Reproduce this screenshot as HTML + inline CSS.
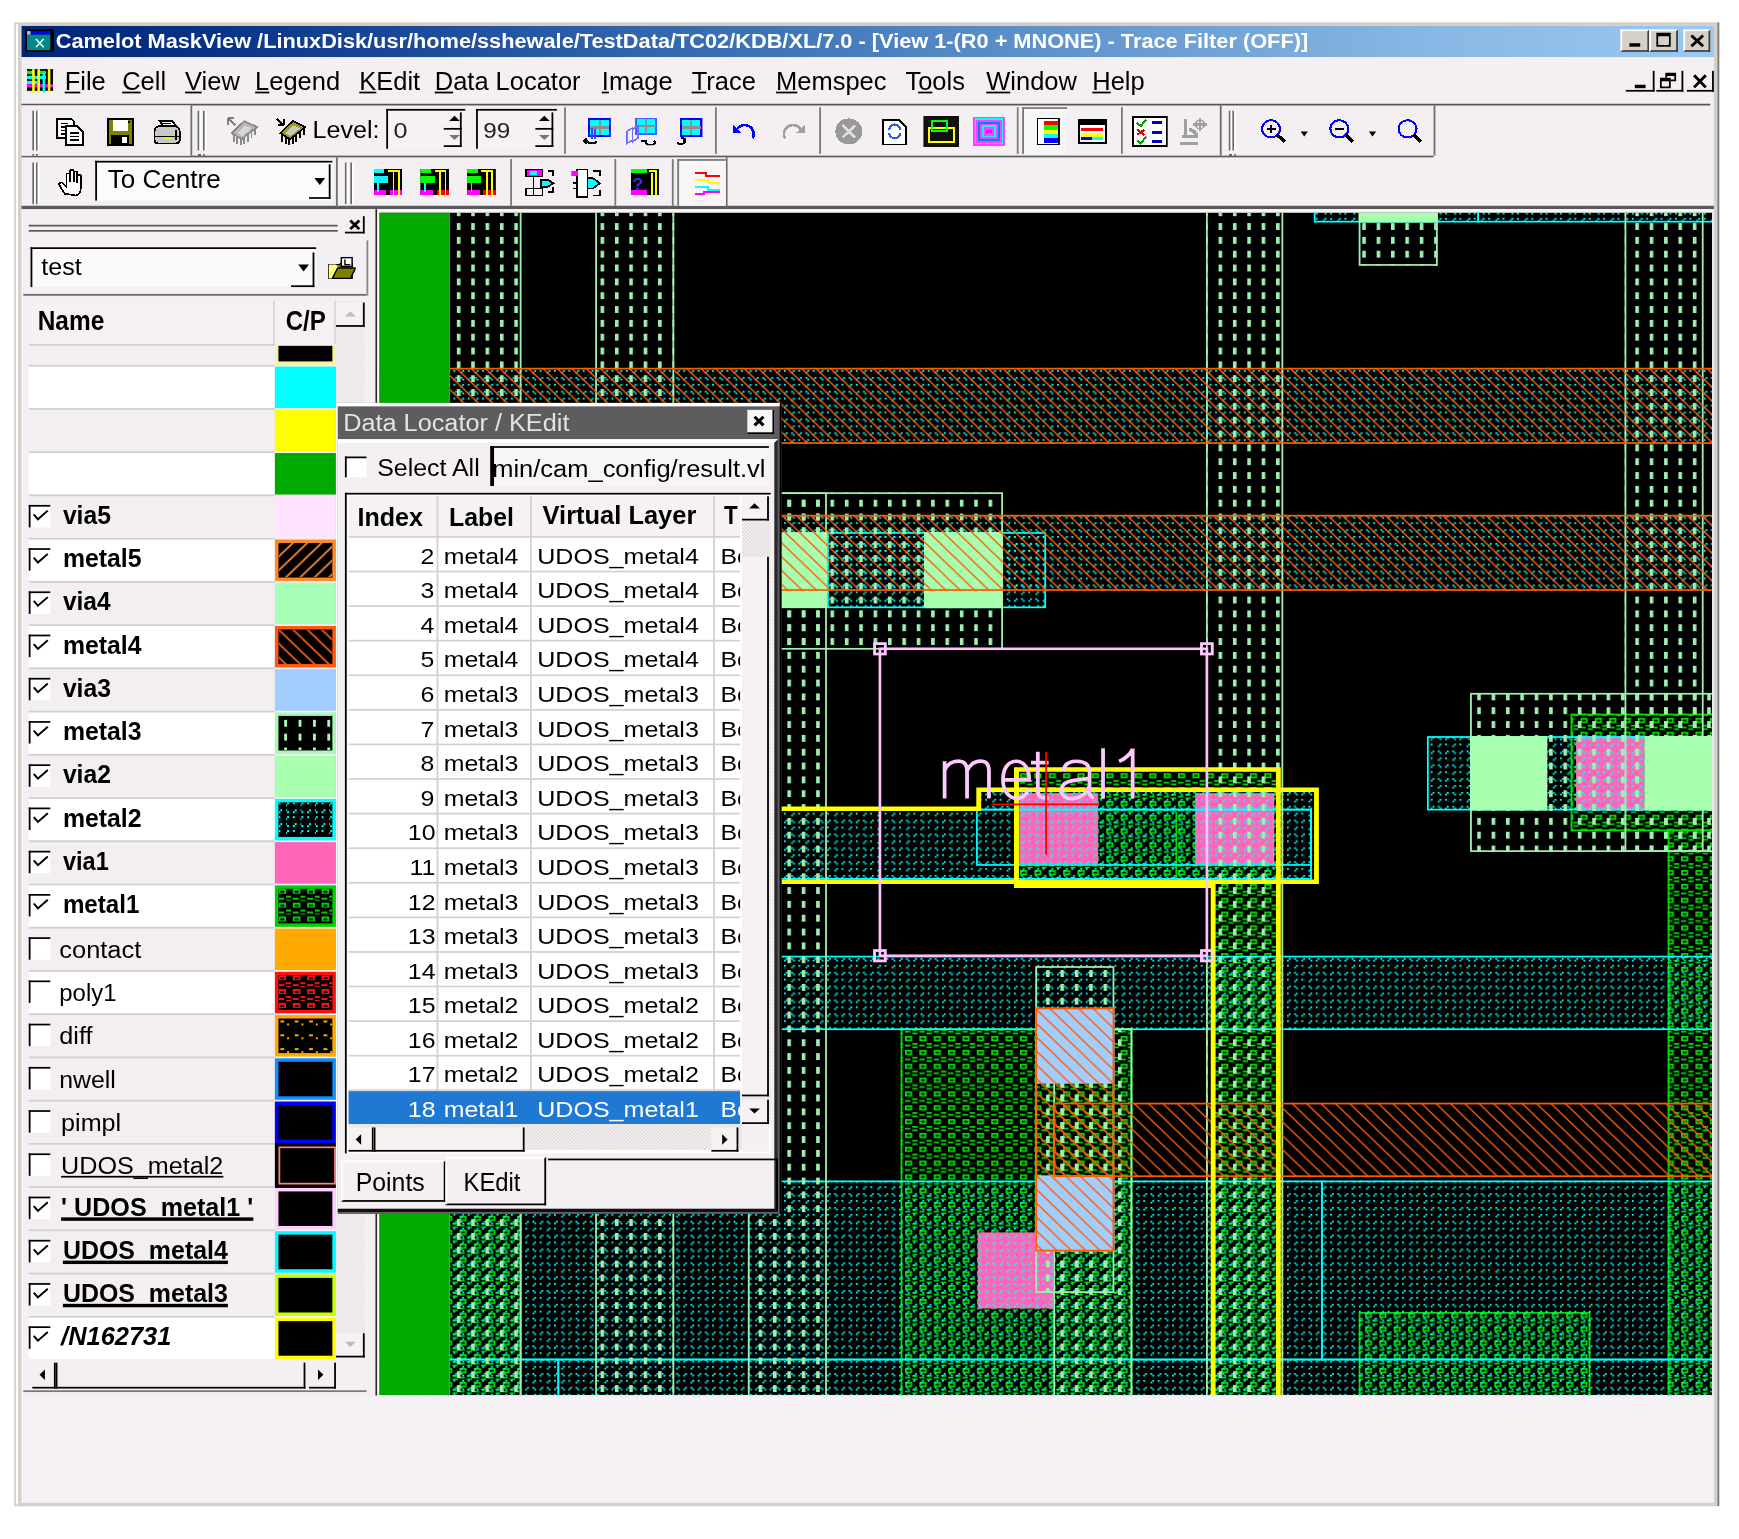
<!DOCTYPE html>
<html><head><meta charset="utf-8"><style>
html,body{margin:0;padding:0;background:#fff;overflow:hidden;width:1739px;height:1539px}
#root{will-change:transform;position:absolute;left:0;top:0;width:968px;height:890px;transform:scale(1.796488,1.729213);transform-origin:0 0;font-family:"Liberation Sans", sans-serif}
u{text-decoration:none;border-bottom:1px solid currentColor}
</style></head><body><div id="root">
<div style="position:absolute;left:8px;top:13px;width:949.4px;height:858.4px;background:#d8d2cc;"></div><div style="position:absolute;left:9px;top:14px;width:946.5px;height:855.6px;background:#ffffff;"></div><div style="position:absolute;left:10px;top:13.4px;width:946.3px;height:858.0px;background:#d6d0ca;"></div><div style="position:absolute;left:956.3px;top:13.4px;width:1.1000000000000227px;height:858.0px;background:#7a7a7a;"></div><div style="position:absolute;left:8px;top:13.4px;width:1px;height:858.0px;background:#d8d2cc;"></div><div style="position:absolute;left:9px;top:14.2px;width:1px;height:855.3px;background:#ffffff;"></div><div style="position:absolute;left:12.2px;top:14.6px;width:942.3px;height:854.6px;background:#f4eff2;"></div><div style="position:absolute;left:12.2px;top:14.6px;width:942.0px;height:18.1px;background:linear-gradient(to right,#002478 0%,#0a3488 12%,#3a70b4 42%,#5a8ec8 58%,#86b6e2 82%,#9cc8f0 100%);"></div><div style="position:absolute;left:13.5px;top:16.7px;width:16.1px;height:13.8px;background:#000;"><div style="position:absolute;left:1.8px;top:1.8px;width:12.5px;height:2px;background:#0000ff"></div><div style="position:absolute;left:1.8px;top:3.8px;width:12.5px;height:8.2px;background:#008888"></div><div style="position:absolute;left:1.8px;top:1.8px;width:2px;height:2px;background:#c0c0c0"></div><svg style="position:absolute;left:0;top:0" width="16" height="14"><path d="M6 5.6L10.3 10.3M10.3 5.6L6 10.3" stroke="#e0ffff" stroke-width="0.9"/></svg></div><div style="position:absolute;left:31.17px;top:18.63px;font-size:11.26px;font-weight:bold;color:#fff;white-space:nowrap;line-height:1;transform:scaleX(1.0759);transform-origin:0 0;">Camelot MaskView /LinuxDisk/usr/home/sshewale/TestData/TC02/KDB/XL/7.0 - [View 1-(R0 + MNONE) - Trace Filter (OFF)]</div><div style="position:absolute;left:902.4px;top:16.9px;width:15.6px;height:13.5px;background:#d4d0c8;border-top:1px solid #fff;border-left:1px solid #fff;border-right:1px solid #404040;border-bottom:1px solid #404040;box-sizing:border-box;"><div style="position:absolute;left:3.5px;top:7.5px;width:6px;height:2px;background:#000"></div></div><div style="position:absolute;left:918.3px;top:16.9px;width:15.6px;height:13.5px;background:#d4d0c8;border-top:1px solid #fff;border-left:1px solid #fff;border-right:1px solid #404040;border-bottom:1px solid #404040;box-sizing:border-box;"><div style="position:absolute;left:2.5px;top:1.5px;width:8.5px;height:7.5px;border:1px solid #000;border-top-width:2px;box-sizing:border-box"></div></div><div style="position:absolute;left:936.6px;top:16.9px;width:15.6px;height:13.5px;background:#d4d0c8;border-top:1px solid #fff;border-left:1px solid #fff;border-right:1px solid #404040;border-bottom:1px solid #404040;box-sizing:border-box;"><svg style="position:absolute;left:0;top:0" width="14" height="12"><path d="M3.5 2.5L10 8.8M10 2.5L3.5 8.8" stroke="#000" stroke-width="1.6"/></svg></div><div style="position:absolute;left:15px;top:39.3px;width:14.5px;height:14.5px;"><svg width="14.5" height="14.5" viewBox="0 0 15 15" style="position:absolute;left:0;top:0"><rect x="0" y="1" width="15" height="13" fill="#000"/><rect x="0" y="2" width="4" height="2" fill="#00ff00"/><rect x="7" y="2" width="4" height="2" fill="#00ff00"/><rect x="0" y="5" width="11" height="2" fill="#00ffff"/><rect x="0" y="8" width="6" height="2" fill="#00ffff"/><rect x="0" y="10" width="15" height="2" fill="#ff00ff"/><rect x="3" y="1" width="1.5" height="14" fill="#ffff00"/><rect x="6" y="1" width="1.5" height="14" fill="#ffff00"/><rect x="9" y="3" width="1.5" height="12" fill="#00ffff"/><rect x="12" y="1" width="1.5" height="13" fill="#ffff00"/></svg></div><div style="position:absolute;left:35.51px;top:39.91px;font-size:14.54px;font-weight:normal;color:#000;white-space:nowrap;line-height:1;transform:scaleX(0.9754);transform-origin:0 0;color:#000;"><span style="text-decoration:underline;text-underline-offset:1.1px;text-decoration-thickness:1px">F</span>ile</div><div style="position:absolute;left:68.19px;top:39.91px;font-size:14.54px;font-weight:normal;color:#000;white-space:nowrap;line-height:1;transform:scaleX(0.9754);transform-origin:0 0;color:#000;"><span style="text-decoration:underline;text-underline-offset:1.1px;text-decoration-thickness:1px">C</span>ell</div><div style="position:absolute;left:102.76px;top:39.91px;font-size:14.54px;font-weight:normal;color:#000;white-space:nowrap;line-height:1;transform:scaleX(0.9754);transform-origin:0 0;color:#000;"><span style="text-decoration:underline;text-underline-offset:1.1px;text-decoration-thickness:1px">V</span>iew</div><div style="position:absolute;left:141.55px;top:39.91px;font-size:14.54px;font-weight:normal;color:#000;white-space:nowrap;line-height:1;transform:scaleX(0.9754);transform-origin:0 0;color:#000;"><span style="text-decoration:underline;text-underline-offset:1.1px;text-decoration-thickness:1px">L</span>egend</div><div style="position:absolute;left:199.78px;top:39.91px;font-size:14.54px;font-weight:normal;color:#000;white-space:nowrap;line-height:1;transform:scaleX(0.9754);transform-origin:0 0;color:#000;"><span style="text-decoration:underline;text-underline-offset:1.1px;text-decoration-thickness:1px">K</span>Edit</div><div style="position:absolute;left:242.42px;top:39.91px;font-size:14.54px;font-weight:normal;color:#000;white-space:nowrap;line-height:1;transform:scaleX(0.9754);transform-origin:0 0;color:#000;"><span style="text-decoration:underline;text-underline-offset:1.1px;text-decoration-thickness:1px">D</span>ata Locator</div><div style="position:absolute;left:334.76px;top:39.91px;font-size:14.54px;font-weight:normal;color:#000;white-space:nowrap;line-height:1;transform:scaleX(0.9754);transform-origin:0 0;color:#000;"><span style="text-decoration:underline;text-underline-offset:1.1px;text-decoration-thickness:1px">I</span>mage</div><div style="position:absolute;left:384.70px;top:39.91px;font-size:14.54px;font-weight:normal;color:#000;white-space:nowrap;line-height:1;transform:scaleX(0.9754);transform-origin:0 0;color:#000;"><span style="text-decoration:underline;text-underline-offset:1.1px;text-decoration-thickness:1px">T</span>race</div><div style="position:absolute;left:431.79px;top:39.91px;font-size:14.54px;font-weight:normal;color:#000;white-space:nowrap;line-height:1;transform:scaleX(0.9754);transform-origin:0 0;color:#000;"><span style="text-decoration:underline;text-underline-offset:1.1px;text-decoration-thickness:1px">M</span>emspec</div><div style="position:absolute;left:504.32px;top:39.91px;font-size:14.54px;font-weight:normal;color:#000;white-space:nowrap;line-height:1;transform:scaleX(0.9754);transform-origin:0 0;color:#000;">T<span style="text-decoration:underline;text-underline-offset:1.1px;text-decoration-thickness:1px">o</span>ols</div><div style="position:absolute;left:548.51px;top:39.91px;font-size:14.54px;font-weight:normal;color:#000;white-space:nowrap;line-height:1;transform:scaleX(0.9754);transform-origin:0 0;color:#000;"><span style="text-decoration:underline;text-underline-offset:1.1px;text-decoration-thickness:1px">W</span>indow</div><div style="position:absolute;left:608.47px;top:39.91px;font-size:14.54px;font-weight:normal;color:#000;white-space:nowrap;line-height:1;transform:scaleX(0.9754);transform-origin:0 0;color:#000;"><span style="text-decoration:underline;text-underline-offset:1.1px;text-decoration-thickness:1px">H</span>elp</div><div style="position:absolute;left:905px;top:40.6px;width:16px;height:12.899999999999999px;border-right:1px solid #000;border-bottom:1px solid #000;box-sizing:border-box;"><div style="position:absolute;left:4.5px;top:8px;width:6px;height:2px;background:#000"></div></div><div style="position:absolute;left:921.5px;top:40.6px;width:15.5px;height:12.899999999999999px;border-right:1px solid #000;border-bottom:1px solid #000;box-sizing:border-box;"><div style="position:absolute;left:5px;top:1.5px;width:6px;height:5px;border:1px solid #000;border-top-width:2px;box-sizing:border-box"></div><div style="position:absolute;left:2.5px;top:4.5px;width:6px;height:5.5px;border:1px solid #000;border-top-width:2px;box-sizing:border-box;background:#f4eff2"></div></div><div style="position:absolute;left:939.3px;top:40.6px;width:14.900000000000091px;height:12.899999999999999px;border-right:1px solid #000;border-bottom:1px solid #000;box-sizing:border-box;"><svg style="position:absolute;left:0;top:0" width="15" height="13"><path d="M4 2.5L10.5 9.5M10.5 2.5L4 9.5" stroke="#000" stroke-width="1.6"/></svg></div><div style="position:absolute;left:12.2px;top:59.8px;width:940.1999999999999px;height:1.0px;background:#555;"></div><div style="position:absolute;left:12.2px;top:807.2px;width:942.0px;height:62.0px;background:#f4eff2;"></div><div style="position:absolute;left:13px;top:808px;width:940px;height:60px;background:#f5f1f4;"></div><div style="position:absolute;left:12.2px;top:89.6px;width:785.8599999999999px;height:1.0px;background:#5f5f5f;"></div><div style="position:absolute;left:12.2px;top:119.4px;width:942.0px;height:1.8999999999999915px;background:#5a5a5a;"></div><div style="position:absolute;left:210.4px;top:121.3px;width:743.8000000000001px;height:1.2000000000000028px;background:#fbf9fa;"></div><div style="position:absolute;left:12.2px;top:60.8px;width:93.67326049453709px;height:28.799999999999997px;background:#f3eef1;"></div><div style="position:absolute;left:17.53px;top:63.6px;width:1.0px;height:23.4px;background:#6a6a6a;"></div><div style="position:absolute;left:18.53px;top:63.6px;width:1.0px;height:23.4px;background:#ffffff;"></div><div style="position:absolute;left:19.73px;top:63.6px;width:1.0px;height:23.4px;background:#6a6a6a;"></div><div style="position:absolute;left:20.73px;top:63.6px;width:1.0px;height:23.4px;background:#ffffff;"></div><div style="position:absolute;left:17.53px;top:88.5px;width:3.5px;height:0.7999999999999972px;border-top:1px dotted #666;box-sizing:border-box;"></div><div style="position:absolute;left:110.49px;top:63.6px;width:1.0px;height:23.4px;background:#6a6a6a;"></div><div style="position:absolute;left:111.49px;top:63.6px;width:1.0px;height:23.4px;background:#ffffff;"></div><div style="position:absolute;left:112.69px;top:63.6px;width:1.0px;height:23.4px;background:#6a6a6a;"></div><div style="position:absolute;left:113.69px;top:63.6px;width:1.0px;height:23.4px;background:#ffffff;"></div><div style="position:absolute;left:110.49px;top:88.5px;width:3.5px;height:0.7999999999999972px;border-top:1px dotted #666;box-sizing:border-box;"></div><div style="position:absolute;left:684.11px;top:63.6px;width:1.0px;height:23.4px;background:#6a6a6a;"></div><div style="position:absolute;left:685.11px;top:63.6px;width:1.0px;height:23.4px;background:#ffffff;"></div><div style="position:absolute;left:686.3100000000001px;top:63.6px;width:1.0px;height:23.4px;background:#6a6a6a;"></div><div style="position:absolute;left:687.3100000000001px;top:63.6px;width:1.0px;height:23.4px;background:#ffffff;"></div><div style="position:absolute;left:684.11px;top:88.5px;width:3.5px;height:0.7999999999999972px;border-top:1px dotted #666;box-sizing:border-box;"></div><div style="position:absolute;left:17.53px;top:93.5px;width:1.0px;height:24.0px;background:#6a6a6a;"></div><div style="position:absolute;left:18.53px;top:93.5px;width:1.0px;height:24.0px;background:#ffffff;"></div><div style="position:absolute;left:19.73px;top:93.5px;width:1.0px;height:24.0px;background:#6a6a6a;"></div><div style="position:absolute;left:20.73px;top:93.5px;width:1.0px;height:24.0px;background:#ffffff;"></div><div style="position:absolute;left:17.53px;top:119.0px;width:3.5px;height:0.7999999999999972px;border-top:1px dotted #666;box-sizing:border-box;"></div><div style="position:absolute;left:192.32px;top:93.5px;width:1.0px;height:24.0px;background:#6a6a6a;"></div><div style="position:absolute;left:193.32px;top:93.5px;width:1.0px;height:24.0px;background:#ffffff;"></div><div style="position:absolute;left:194.51999999999998px;top:93.5px;width:1.0px;height:24.0px;background:#6a6a6a;"></div><div style="position:absolute;left:195.51999999999998px;top:93.5px;width:1.0px;height:24.0px;background:#ffffff;"></div><div style="position:absolute;left:192.32px;top:119.0px;width:3.5px;height:0.7999999999999972px;border-top:1px dotted #666;box-sizing:border-box;"></div><div style="position:absolute;left:105.87px;top:61px;width:1.0px;height:28.599999999999994px;background:#6e6e6e;"></div><div style="position:absolute;left:679.21px;top:61px;width:1.0px;height:28.599999999999994px;background:#6e6e6e;"></div><div style="position:absolute;left:798.06px;top:61px;width:1.0px;height:28.599999999999994px;background:#6e6e6e;"></div><div style="position:absolute;left:187.25px;top:91px;width:1.0px;height:29px;background:#6e6e6e;"></div><div style="position:absolute;left:404.12px;top:91px;width:1.0px;height:29px;background:#6e6e6e;"></div><div style="position:absolute;left:313.95px;top:62px;width:1.0px;height:26.599999999999994px;background:#7a7a7a;"></div><div style="position:absolute;left:397.72px;top:62px;width:1.0px;height:26.599999999999994px;background:#7a7a7a;"></div><div style="position:absolute;left:455.78px;top:62px;width:1.0px;height:26.599999999999994px;background:#7a7a7a;"></div><div style="position:absolute;left:565.99px;top:62px;width:1.0px;height:26.599999999999994px;background:#7a7a7a;"></div><div style="position:absolute;left:623.88px;top:62px;width:1.0px;height:26.599999999999994px;background:#7a7a7a;"></div><div style="position:absolute;left:283.66px;top:92px;width:1.0px;height:27px;background:#7a7a7a;"></div><div style="position:absolute;left:341.78px;top:92px;width:1.0px;height:27px;background:#7a7a7a;"></div><div style="position:absolute;left:373.78px;top:92px;width:1.0px;height:27px;background:#7a7a7a;"></div><svg style="position:absolute;left:31.17px;top:67.5px" width="17" height="17" viewBox="0 0 17 17" shape-rendering="crispEdges"><path d="M1 1h8l1 1v10H1z" fill="#fff" stroke="#000" stroke-width="1.1"/><path d="M3 3.5h4M3 5.5h2M3 7.5h2M3 9.5h2" stroke="#000" stroke-width="0.9"/><path d="M6 5h6l3 3v8H6z" fill="#fff" stroke="#000" stroke-width="1.1"/><path d="M8 9h5M8 11h5M8 13h5" stroke="#000" stroke-width="0.9"/></svg><svg style="position:absolute;left:59.0px;top:67.5px" width="16" height="17" viewBox="0 0 16 17" shape-rendering="crispEdges"><rect x="1" y="1" width="14" height="15" fill="#808000" stroke="#000" stroke-width="1.1"/><rect x="4" y="1.5" width="8.5" height="6.5" fill="#fff"/><rect x="12.5" y="2" width="1" height="1.2" fill="#000"/><rect x="3" y="10" width="10" height="5.5" fill="#000"/><rect x="9" y="11" width="2.5" height="3.5" fill="#fff"/></svg><svg style="position:absolute;left:84.05px;top:67.5px" width="17" height="17" viewBox="0 0 17 17" shape-rendering="crispEdges"><path d="M5 2l7 0 2 3-7 0z" fill="#fff" stroke="#000" stroke-width="1"/><path d="M6 3.5h5M6.5 5h4" stroke="#000" stroke-width="0.7"/><path d="M2 8c0-2 1-3 3-3h8c2 0 3 1 3 3v5c0 1-1 2-2 2H4c-1 0-2-1-2-2z" fill="#c8c8c8" stroke="#000" stroke-width="1.1"/><path d="M2 11h14" stroke="#000" stroke-width="0.8"/><rect x="8" y="11.6" width="3" height="1" fill="#ffff00"/><path d="M14 7v6" stroke="#000" stroke-width="0.7"/></svg><svg style="position:absolute;left:125.8px;top:67px" width="18" height="18" viewBox="0 0 18 18" shape-rendering="crispEdges"><path d="M4 15v-5M6 16v-5M8 17v-4M10 16v-5M12 15v-5M14 13v-5M16 11v-5" stroke="#8a8a8a" stroke-width="1.1"/><path d="M3 10L10 3L17 6.5L8.5 13.5Z" fill="#b8b8b8" stroke="#8a8a8a" stroke-width="1"/><path d="M6 10L10.2 5.6L14 7.2L8.8 11.6Z" fill="#d8d8d8"/><path d="M1 1.5l4 4M1 1.5h3.5M1 1.5v3.5" stroke="#808080" stroke-width="1.2"/></svg><svg style="position:absolute;left:152.52px;top:67px" width="18" height="18" viewBox="0 0 18 18" shape-rendering="crispEdges"><path d="M4 15v-5M6 16v-5M8 17v-4M10 16v-5M12 15v-5M14 13v-5M16 11v-5" stroke="#000" stroke-width="1.1"/><path d="M3 10L10 3L17 6.5L8.5 13.5Z" fill="#a09820" stroke="#000" stroke-width="1"/><path d="M6 10L10.2 5.6L14 7.2L8.8 11.6Z" fill="#c8c8c8"/><path d="M1 1.5l3.5 3.5M5 5.5h-3.5M5 5.5v-3.5" stroke="#000" stroke-width="1.2"/></svg><div style="position:absolute;left:173.89px;top:69.41px;font-size:13.79px;font-weight:normal;color:#000;white-space:nowrap;line-height:1;transform:scaleX(1.0139);transform-origin:0 0;">Level:</div><div style="position:absolute;left:215.42px;top:63px;width:43.97999999999999px;height:23.299999999999997px;border-left:1.5px solid #000;border-top:1.5px solid #000;box-sizing:border-box;background:#f6f2f4;"></div><div style="position:absolute;left:247.39999999999998px;top:64.5px;width:10.0px;height:10.0px;border-right:1px solid #000;border-bottom:1px solid #000;box-sizing:border-box;"><div style="position:absolute;left:2.5px;top:2.5px;width:0;height:0;border-left:3px solid transparent;border-right:3px solid transparent;border-bottom:3px solid #000"></div></div><div style="position:absolute;left:247.39999999999998px;top:75px;width:10.0px;height:10px;border-right:1px solid #000;border-bottom:1px solid #000;box-sizing:border-box;"><div style="position:absolute;left:2.5px;top:3px;width:0;height:0;border-left:3px solid transparent;border-right:3px solid transparent;border-top:3px solid #777"></div></div><div style="position:absolute;left:218.98px;top:70.26px;font-size:12.78px;font-weight:normal;color:#222;white-space:nowrap;line-height:1;transform:scaleX(1.0967);transform-origin:0 0;">0</div><div style="position:absolute;left:265.35px;top:63px;width:44.370000000000005px;height:23.299999999999997px;border-left:1.5px solid #000;border-top:1.5px solid #000;box-sizing:border-box;background:#f6f2f4;"></div><div style="position:absolute;left:297.72px;top:64.5px;width:10.0px;height:10.0px;border-right:1px solid #000;border-bottom:1px solid #000;box-sizing:border-box;"><div style="position:absolute;left:2.5px;top:2.5px;width:0;height:0;border-left:3px solid transparent;border-right:3px solid transparent;border-bottom:3px solid #000"></div></div><div style="position:absolute;left:297.72px;top:75px;width:10.0px;height:10px;border-right:1px solid #000;border-bottom:1px solid #000;box-sizing:border-box;"><div style="position:absolute;left:2.5px;top:3px;width:0;height:0;border-left:3px solid transparent;border-right:3px solid transparent;border-top:3px solid #777"></div></div><div style="position:absolute;left:268.86px;top:70.26px;font-size:12.78px;font-weight:normal;color:#222;white-space:nowrap;line-height:1;transform:scaleX(1.0575);transform-origin:0 0;">99</div><svg style="position:absolute;left:323.8px;top:68px" width="16" height="16" viewBox="0 0 16 16" shape-rendering="crispEdges"><rect x="4" y="1" width="11.5" height="9.5" fill="#00ffff" stroke="#0000ff" stroke-width="1.2"/><path d="M9.8 1.5v8.5M4.5 5.8h10.5" stroke="#909090" stroke-width="1.3"/><path d="M5.5 6v6.5M7 6.5v6" stroke="#4040ff" stroke-width="1"/><path d="M1 13.5h2.5M3 13.5a2.5 1.5 0 1 0 5 0" stroke="#000" fill="none" stroke-width="1.2"/><path d="M1 13.5l1.5-1.5M1 13.5l1.5 1.5" stroke="#000" stroke-width="1.2"/></svg><svg style="position:absolute;left:347.73px;top:68px" width="20" height="16" viewBox="0 0 20 16" shape-rendering="crispEdges"><rect x="6" y="0.5" width="11" height="9" fill="#00ffff" stroke="#4060ff" stroke-width="1.1"/><path d="M11.5 1v8.5M6.5 5h10.5" stroke="#909090" stroke-width="1.3"/><path d="M1 8l3-2v7l-3 2zM4 7l3-2v7l-3 2z" fill="none" stroke="#7070ff" stroke-width="0.9"/><path d="M9 13.5h3M12 13.5a2.5 1.5 0 1 0 4 0" stroke="#000" fill="none" stroke-width="1.2"/></svg><svg style="position:absolute;left:375.18px;top:68px" width="16" height="16" viewBox="0 0 16 16" shape-rendering="crispEdges"><rect x="4" y="1" width="11.5" height="9.5" fill="#00ffff" stroke="#0000ff" stroke-width="1.2"/><path d="M9.8 1.5v8.5M4.5 5.8h10.5" stroke="#909090" stroke-width="1.3"/><path d="M2 14.5a2 1.5 0 0 0 4 -2.5M6 12l-2 0M6 12l0 2" stroke="#000" fill="none" stroke-width="1.1"/></svg><svg style="position:absolute;left:406.91px;top:69px" width="16" height="14" viewBox="0 0 16 14" shape-rendering="crispEdges"><path d="M3 6a5 5 0 1 1 9 5" fill="none" stroke="#0000ff" stroke-width="1.5"/><path d="M1 3v5h5z" fill="#0000ff"/></svg><svg style="position:absolute;left:432.96px;top:69px" width="16" height="14" viewBox="0 0 16 14" shape-rendering="crispEdges"><path d="M13 6a5 5 0 1 0 -9 5" fill="none" stroke="#a0a0a0" stroke-width="1.5"/><path d="M15 3v5h-5z" fill="#a0a0a0"/></svg><svg style="position:absolute;left:463.96px;top:68px" width="17" height="16" viewBox="0 0 17 16" shape-rendering="crispEdges"><circle cx="8.5" cy="8" r="7.5" fill="#999"/><path d="M5 4.5l7 7M12 4.5l-7 7" stroke="#ddd" stroke-width="1.5"/></svg><svg style="position:absolute;left:489.84px;top:68px" width="16" height="16" viewBox="0 0 16 16" shape-rendering="crispEdges"><path d="M1.5 1.5h9l4 4v10h-13z" fill="#fff" stroke="#000"/><path d="M5 7a3 3 0 0 1 6 0M11 9a3 3 0 0 1 -6 0" fill="none" stroke="#2060ff" stroke-width="1.2"/></svg><svg style="position:absolute;left:514.0px;top:67px" width="20" height="18" viewBox="0 0 20 18" shape-rendering="crispEdges"><rect x="0" y="0" width="20" height="18" fill="#111"/><rect x="3" y="7" width="14" height="8" fill="none" stroke="#ffff00" stroke-width="1.2"/><rect x="5" y="3" width="8" height="6" fill="none" stroke="#00ff00" stroke-width="1.2"/></svg><svg style="position:absolute;left:540.89px;top:67px" width="19" height="18" viewBox="0 0 19 18" shape-rendering="crispEdges"><rect x="0.5" y="0.5" width="18" height="17" fill="#ff40ff"/><rect x="2" y="2" width="15" height="14" fill="none" stroke="#00ffff"/><rect x="4" y="4" width="11" height="10" fill="none" stroke="#0080ff"/><rect x="6" y="6" width="7" height="6" fill="none" stroke="#00ffff"/><rect x="8" y="8" width="3" height="2" fill="#ff00ff"/></svg><div style="position:absolute;left:569.33px;top:61.5px;width:24.5px;height:27.5px;border-left:1px solid #777;border-top:1px solid #777;box-sizing:border-box;background:#f8f5f7"></div><svg style="position:absolute;left:577.13px;top:68px" width="13" height="16" viewBox="0 0 13 16" shape-rendering="crispEdges"><rect x="0.5" y="0.5" width="12" height="15" fill="#fff" stroke="#000"/><rect x="4" y="2" width="8" height="2.5" fill="#ff0000"/><rect x="4" y="4.5" width="8" height="2.5" fill="#00ff00"/><rect x="4" y="7" width="8" height="2.5" fill="#ffff00"/><rect x="4" y="9.5" width="8" height="2.5" fill="#00ffff"/><rect x="4" y="12" width="8" height="2.5" fill="#0000ff"/></svg><svg style="position:absolute;left:600.34px;top:68px" width="17" height="16" viewBox="0 0 17 16" shape-rendering="crispEdges"><rect x="0.5" y="1.5" width="15" height="13" fill="#fff" stroke="#000"/><rect x="1" y="2" width="15" height="2" fill="#000"/><rect x="2" y="6" width="12" height="2" fill="#ff0000"/><rect x="2" y="9" width="12" height="2" fill="#ffff00"/><rect x="2" y="11" width="6" height="2" fill="#0000ff"/><rect x="8" y="11" width="6" height="2" fill="#00ffff"/></svg><svg style="position:absolute;left:630.4px;top:67px" width="20" height="18" viewBox="0 0 20 18" shape-rendering="crispEdges"><rect x="0.5" y="0.5" width="19" height="17" fill="#fff" stroke="#000"/><path d="M3 4l2 2 3-4M3 14l2 2 3-4" stroke="#00a000" fill="none" stroke-width="1.2"/><path d="M3 8l4 3M7 8l-4 3" stroke="#e00000" stroke-width="1.2"/><path d="M11 4h6M11 9.5h6M11 15h6" stroke="#0000c0" stroke-width="1.6"/></svg><svg style="position:absolute;left:656.0px;top:67px" width="17" height="18" viewBox="0 0 17 18" shape-rendering="crispEdges"><path d="M4 2v9M2 12h8a4 4 0 0 0 -4 -4M1 16h10" stroke="#a0a0a0" fill="none" stroke-width="2"/><path d="M12 1v8M8 5h8" stroke="#a0a0a0" stroke-width="1.2"/><circle cx="12" cy="5" r="2.5" fill="none" stroke="#a0a0a0"/></svg><svg style="position:absolute;left:700.59px;top:68px" width="16" height="16" viewBox="0 0 16 16" shape-rendering="crispEdges"><circle cx="6.5" cy="6.5" r="5" fill="none" stroke="#0000ff" stroke-width="1.2"/><path d="M10 10l4 4" stroke="#000" stroke-width="2"/><path d="M4 6.5h5" stroke="#000" stroke-width="1.5"/><path d="M6.5 4v5" stroke="#000" stroke-width="1.5"/></svg><svg style="position:absolute;left:738.66px;top:68px" width="16" height="16" viewBox="0 0 16 16" shape-rendering="crispEdges"><circle cx="6.5" cy="6.5" r="5" fill="none" stroke="#0000ff" stroke-width="1.2"/><path d="M10 10l4 4" stroke="#000" stroke-width="2"/><path d="M4 6.5h5" stroke="#000" stroke-width="1.5"/></svg><svg style="position:absolute;left:776.52px;top:68px" width="16" height="16" viewBox="0 0 16 16" shape-rendering="crispEdges"><circle cx="6.5" cy="6.5" r="5" fill="none" stroke="#0000ff" stroke-width="1.2"/><path d="M10 10l4 4" stroke="#000" stroke-width="2"/></svg><div style="position:absolute;left:723.63px;top:76px;width:5.0px;height:3px;"><div style="width:0;height:0;border-left:2.5px solid transparent;border-right:2.5px solid transparent;border-top:3px solid #000"></div></div><div style="position:absolute;left:761.88px;top:76px;width:5.0px;height:3px;"><div style="width:0;height:0;border-left:2.5px solid transparent;border-right:2.5px solid transparent;border-top:3px solid #000"></div></div><svg style="position:absolute;left:32.3px;top:97px" width="16" height="17" viewBox="0 0 16 17" shape-rendering="crispEdges"><path d="M4 15l-3-5c-.5-1 1-2 2-1l2 2V4c0-1 2-1 2 0v4V2c0-1 2-1 2 0v6V3c0-1 2-1 2 0v6V5c0-1 2-1 2 0v6c0 3-1 5-3 5z" fill="#fff" stroke="#000" stroke-width="1"/></svg><div style="position:absolute;left:53.4px;top:92.9px;width:131.7px;height:23.5px;border-left:1.5px solid #000;border-top:1.5px solid #000;background:#fcfafb;box-sizing:border-box;"></div><div style="position:absolute;left:60.12px;top:97.13px;font-size:14.71px;font-weight:normal;color:#000;white-space:nowrap;line-height:1;transform:scaleX(0.9863);transform-origin:0 0;">To Centre</div><div style="position:absolute;left:171.5px;top:95px;width:12.5px;height:19.599999999999994px;border-right:1.5px solid #000;border-bottom:1.5px solid #000;box-sizing:border-box;"><div style="position:absolute;left:3px;top:8px;width:0;height:0;border-left:3.5px solid transparent;border-right:3.5px solid transparent;border-top:4px solid #000"></div></div><svg style="position:absolute;left:208.41px;top:97px" width="16" height="16" viewBox="0 0 16 16" shape-rendering="crispEdges"><rect x="0" y="1" width="16" height="15" fill="#000"/><rect x="0" y="1" width="6" height="2" fill="#00ffff"/><rect x="0" y="5" width="8" height="4" fill="#00ffff"/><rect x="0" y="13" width="7" height="3" fill="#ff00ff"/><rect x="9" y="13" width="7" height="3" fill="#ff00ff"/><path d="M8 2h6v14M11 2v14" stroke="#ffff00" fill="none"/><rect x="2" y="9" width="1" height="5" fill="#00ffff"/></svg><svg style="position:absolute;left:234.35px;top:97px" width="16" height="16" viewBox="0 0 16 16" shape-rendering="crispEdges"><rect x="0" y="1" width="16" height="15" fill="#000"/><rect x="0" y="1" width="6" height="2" fill="#00ff00"/><rect x="0" y="5" width="8" height="4" fill="#00ff00"/><rect x="0" y="13" width="7" height="3" fill="#ff00ff"/><rect x="9" y="13" width="7" height="3" fill="#ff0000"/><path d="M8 2h6v14M11 2v14" stroke="#ffff00" fill="none"/><rect x="2" y="9" width="1" height="5" fill="#00ffff"/></svg><svg style="position:absolute;left:260.12px;top:97px" width="16" height="16" viewBox="0 0 16 16" shape-rendering="crispEdges"><rect x="0" y="1" width="16" height="15" fill="#000"/><rect x="0" y="1" width="6" height="2" fill="#00ff00"/><rect x="0" y="5" width="8" height="4" fill="#00ff00"/><rect x="0" y="13" width="7" height="3" fill="#ff00ff"/><rect x="9" y="13" width="7" height="3" fill="#ff0000"/><path d="M8 2h6v14M11 2v14" stroke="#ffff00" fill="none"/><rect x="2" y="9" width="1" height="5" fill="#00ffff"/></svg><svg style="position:absolute;left:292.13px;top:97px" width="18" height="17" viewBox="0 0 18 17" shape-rendering="crispEdges"><rect x="1" y="1" width="9" height="4" fill="#ff00ff" stroke="#000"/><rect x="3" y="2" width="4" height="2" fill="#00ffff"/><path d="M5 5v7M1 12h9v4H1zM5 12v4" stroke="#000" fill="none"/><path d="M9 7h4l3 2-3 2H9z" fill="#00ffff" stroke="#000"/><path d="M13 2h3v3M13 14h3v-3" stroke="#000" fill="none"/></svg><svg style="position:absolute;left:318.18px;top:97px" width="18" height="18" viewBox="0 0 18 18" shape-rendering="crispEdges"><rect x="3" y="1" width="6" height="16" fill="#fff" stroke="#000"/><rect x="0" y="2" width="4" height="3" fill="#ff00ff"/><path d="M9 6h3l4 3-4 3H9z" fill="#00ffff" stroke="#000"/><path d="M12 2h4v3M12 16h4v-3M1 9h2M1 12h2" stroke="#000" fill="none"/></svg><svg style="position:absolute;left:350.57px;top:97px" width="16" height="16" viewBox="0 0 16 16" shape-rendering="crispEdges"><rect x="0" y="1" width="16" height="15" fill="#000"/><rect x="0" y="1" width="9" height="2" fill="#00ff00"/><path d="M10 2h4v14M12 3v13" stroke="#ffff00" fill="none"/><text x="1" y="13" font-size="10" font-weight="bold" fill="#3030ff" font-family="Liberation Sans">?</text><rect x="0" y="13" width="9" height="3" fill="#ff00ff"/></svg><div style="position:absolute;left:377.35px;top:91.8px;width:26.769999999999982px;height:26.799999999999997px;border-left:1px solid #777;border-top:1px solid #777;box-sizing:border-box;background:#f8f5f7"></div><svg style="position:absolute;left:385.75px;top:97px" width="16" height="16" viewBox="0 0 16 16" shape-rendering="crispEdges"><path d="M1 3h6v2h8M1 7h7v2h7M1 11h7v2h7M1 15h5v-1h9" stroke-width="1.2" fill="none" stroke="#ff0000"/><path d="M1 7h7v2h7" stroke="#ffff00" fill="none"/><path d="M1 11h7v2h7" stroke="#00ffff" fill="none"/><path d="M1 15h5v-1h9" stroke="#ff00ff" fill="none"/></svg><div style="position:absolute;left:12.2px;top:121.2px;width:197.10000000000002px;height:686.0px;background:#f4eff2;"></div><div style="position:absolute;left:16px;top:129.6px;width:172px;height:1.0px;background:#5a5a5a;"></div><div style="position:absolute;left:16px;top:132.9px;width:172px;height:1.0px;background:#5a5a5a;"></div><div style="position:absolute;left:191.5px;top:125px;width:11.699999999999989px;height:10.300000000000011px;border-right:1px solid #000;border-bottom:1px solid #000;box-sizing:border-box;"><svg width="11" height="10" style="position:absolute;left:0;top:0"><path d="M3 2.5l5 5M8 2.5l-5 5" stroke="#000" stroke-width="1.6"/></svg></div><div style="position:absolute;left:16.5px;top:142.8px;width:159.5px;height:23.19999999999999px;border-left:1.5px solid #000;border-top:1.5px solid #000;background:#fbf9fa;box-sizing:border-box;"></div><div style="position:absolute;left:22.60px;top:148.44px;font-size:13.60px;font-weight:normal;color:#000;white-space:nowrap;line-height:1;transform:scaleX(1.0259);transform-origin:0 0;">test</div><div style="position:absolute;left:161.8px;top:145.5px;width:13.699999999999989px;height:20.099999999999994px;border-right:1.5px solid #000;border-bottom:1.5px solid #000;box-sizing:border-box;"><div style="position:absolute;left:4px;top:7.5px;width:0;height:0;border-left:3.5px solid transparent;border-right:3.5px solid transparent;border-top:4px solid #000"></div></div><svg style="position:absolute;left:182px;top:147.5px" width="16" height="14" viewBox="0 0 16 14"><path d="M1 5h6l1-1h6v9H1z" fill="#808000" stroke="#000" stroke-width="0.8"/><path d="M1 5h4l1 1v7H1z" fill="#ffff80"/><path d="M3 13l3-6h10l-3 6z" fill="#808000" stroke="#000" stroke-width="0.8"/><rect x="8" y="1" width="6" height="5" fill="#fff" stroke="#000" stroke-width="0.8"/><path d="M10 2v3h3" stroke="#000" fill="none" stroke-width="0.8"/></svg><div style="position:absolute;left:13.4px;top:169.6px;width:190.9px;height:1.0px;background:#666;"></div><div style="position:absolute;left:204.3px;top:139.4px;width:1.0px;height:31.19999999999999px;background:#888;"></div><div style="position:absolute;left:16px;top:173.8px;width:171px;height:25.19999999999999px;background:#f5f0f3;"></div><div style="position:absolute;left:152.4px;top:173.8px;width:1.0px;height:25.19999999999999px;background:#d8d3d6;"></div><div style="position:absolute;left:186.4px;top:173.8px;width:1.0px;height:25.19999999999999px;background:#d8d3d6;"></div><div style="position:absolute;left:20.87px;top:178.25px;font-size:15.55px;font-weight:bold;color:#000;white-space:nowrap;line-height:1;transform:scaleX(0.8740);transform-origin:0 0;">Name</div><div style="position:absolute;left:159.09px;top:178.25px;font-size:15.55px;font-weight:bold;color:#000;white-space:nowrap;line-height:1;transform:scaleX(0.8589);transform-origin:0 0;">C/P</div><div style="position:absolute;left:16px;top:198.6px;width:136.6px;height:1.0px;background:#cfcacd;"></div><div style="position:absolute;left:187.4px;top:173.8px;width:15.799999999999983px;height:611.0px;background:repeating-conic-gradient(#f6f2f4 0% 25%, #e6e1e4 0% 50%) 0 0/2px 2px;"></div><div style="position:absolute;left:187.4px;top:175px;width:15.799999999999983px;height:14px;border-right:1px solid #000;border-bottom:1px solid #000;box-sizing:border-box;background:#f6f2f4;"><div style="position:absolute;left:4.5px;top:5px;width:0;height:0;border-left:3.5px solid transparent;border-right:3.5px solid transparent;border-bottom:3.5px solid #bbb"></div></div><div style="position:absolute;left:187.4px;top:771px;width:15.799999999999983px;height:13.799999999999955px;border-right:1px solid #000;border-bottom:1px solid #000;box-sizing:border-box;background:#f6f2f4;"><div style="position:absolute;left:4.5px;top:5px;width:0;height:0;border-left:3.5px solid transparent;border-right:3.5px solid transparent;border-top:3.5px solid #bbb"></div></div><div style="position:absolute;left:152.6px;top:199.6px;width:34.20000000000002px;height:11.400000000000006px;background:#f6f2a0;"></div><div style="position:absolute;left:154.6px;top:199.6px;width:30.200000000000017px;height:9.400000000000006px;background:#000;"></div><div style="position:absolute;left:16px;top:199.6px;width:136.6px;height:11.400000000000006px;background:#f3eef1;"></div><div style="position:absolute;left:16px;top:211px;width:136.6px;height:25px;background:#ffffff;"></div><div style="position:absolute;left:16px;top:211px;width:136.6px;height:1px;background:#d2cdd0;"></div><div style="position:absolute;left:152.6px;top:211.5px;width:34.0px;height:24.5px;background:#00ffff;"></div><div style="position:absolute;left:16px;top:236px;width:136.6px;height:25px;background:#f3eef1;"></div><div style="position:absolute;left:16px;top:236px;width:136.6px;height:1px;background:#d2cdd0;"></div><div style="position:absolute;left:152.6px;top:236.5px;width:34.0px;height:24.5px;background:#ffff00;"></div><div style="position:absolute;left:16px;top:261px;width:136.6px;height:25px;background:#ffffff;"></div><div style="position:absolute;left:16px;top:261px;width:136.6px;height:1px;background:#d2cdd0;"></div><div style="position:absolute;left:152.6px;top:261.5px;width:34.0px;height:24.5px;background:#00aa00;"></div><div style="position:absolute;left:16px;top:286px;width:136.6px;height:25px;background:#f3eef1;"></div><div style="position:absolute;left:16px;top:286px;width:136.6px;height:1px;background:#d2cdd0;"></div><div style="position:absolute;left:152.6px;top:286.5px;width:34.0px;height:24.5px;background:#ffe4ff;"></div><div style="position:absolute;left:16.4px;top:292.2px;width:12.100000000000001px;height:12.400000000000034px;background:#fff;border-left:1.5px solid #000;border-top:1.5px solid #000;box-sizing:border-box;"><svg width="12" height="12" style="position:absolute;left:0;top:0"><path d="M1.8 4.5l2.3 2.8l5.5-5" stroke="#000" stroke-width="1.1" fill="none"/></svg></div><div style="position:absolute;left:34.73px;top:291.07px;font-size:14.50px;font-weight:bold;color:#000;white-space:nowrap;line-height:1;transform:scaleX(0.9487);transform-origin:0 0;">via5</div><div style="position:absolute;left:16px;top:311px;width:136.6px;height:25px;background:#ffffff;"></div><div style="position:absolute;left:16px;top:311px;width:136.6px;height:1px;background:#d2cdd0;"></div><div style="position:absolute;left:152.6px;top:312px;width:34.599999999999994px;height:24px;background:#ff8a2a;"><div style="position:absolute;left:2.3px;top:2px;width:30.4px;height:20px;background:#000;overflow:hidden"><svg width="30" height="20" style="position:absolute;left:0;top:0"><defs><pattern id="pfff8a2a" width="8" height="8" patternUnits="userSpaceOnUse"><path d="M0 8L8 0M-2 2L2 -2M6 10L10 6" stroke="#ff8a2a" stroke-width="1"/></pattern></defs><rect width="30" height="20" fill="url(#pfff8a2a)"/></svg></div></div><div style="position:absolute;left:16.4px;top:317.2px;width:12.100000000000001px;height:12.400000000000034px;background:#fff;border-left:1.5px solid #000;border-top:1.5px solid #000;box-sizing:border-box;"><svg width="12" height="12" style="position:absolute;left:0;top:0"><path d="M1.8 4.5l2.3 2.8l5.5-5" stroke="#000" stroke-width="1.1" fill="none"/></svg></div><div style="position:absolute;left:34.73px;top:316.07px;font-size:14.50px;font-weight:bold;color:#000;white-space:nowrap;line-height:1;transform:scaleX(0.9535);transform-origin:0 0;">metal5</div><div style="position:absolute;left:16px;top:336px;width:136.6px;height:25px;background:#f3eef1;"></div><div style="position:absolute;left:16px;top:336px;width:136.6px;height:1px;background:#d2cdd0;"></div><div style="position:absolute;left:152.6px;top:336.5px;width:34.0px;height:24.5px;background:#a8ffb8;"></div><div style="position:absolute;left:16.4px;top:342.2px;width:12.100000000000001px;height:12.400000000000034px;background:#fff;border-left:1.5px solid #000;border-top:1.5px solid #000;box-sizing:border-box;"><svg width="12" height="12" style="position:absolute;left:0;top:0"><path d="M1.8 4.5l2.3 2.8l5.5-5" stroke="#000" stroke-width="1.1" fill="none"/></svg></div><div style="position:absolute;left:34.73px;top:341.07px;font-size:14.50px;font-weight:bold;color:#000;white-space:nowrap;line-height:1;transform:scaleX(0.9408);transform-origin:0 0;">via4</div><div style="position:absolute;left:16px;top:361px;width:136.6px;height:25px;background:#ffffff;"></div><div style="position:absolute;left:16px;top:361px;width:136.6px;height:1px;background:#d2cdd0;"></div><div style="position:absolute;left:152.6px;top:362px;width:34.599999999999994px;height:24px;background:#ff5a10;"><div style="position:absolute;left:2.3px;top:2px;width:30.4px;height:20px;background:#000;overflow:hidden"><svg width="30" height="20" style="position:absolute;left:0;top:0"><defs><pattern id="pbff5a10" width="8" height="8" patternUnits="userSpaceOnUse"><path d="M0 0L8 8M-2 6L2 10M6 -2L10 2" stroke="#ff5a10" stroke-width="1"/></pattern></defs><rect width="30" height="20" fill="url(#pbff5a10)"/></svg></div></div><div style="position:absolute;left:16.4px;top:367.2px;width:12.100000000000001px;height:12.400000000000034px;background:#fff;border-left:1.5px solid #000;border-top:1.5px solid #000;box-sizing:border-box;"><svg width="12" height="12" style="position:absolute;left:0;top:0"><path d="M1.8 4.5l2.3 2.8l5.5-5" stroke="#000" stroke-width="1.1" fill="none"/></svg></div><div style="position:absolute;left:34.73px;top:366.07px;font-size:14.50px;font-weight:bold;color:#000;white-space:nowrap;line-height:1;transform:scaleX(0.9523);transform-origin:0 0;">metal4</div><div style="position:absolute;left:16px;top:386px;width:136.6px;height:25px;background:#f3eef1;"></div><div style="position:absolute;left:16px;top:386px;width:136.6px;height:1px;background:#d2cdd0;"></div><div style="position:absolute;left:152.6px;top:386.5px;width:34.0px;height:24.5px;background:#a4cdff;"></div><div style="position:absolute;left:16.4px;top:392.2px;width:12.100000000000001px;height:12.400000000000034px;background:#fff;border-left:1.5px solid #000;border-top:1.5px solid #000;box-sizing:border-box;"><svg width="12" height="12" style="position:absolute;left:0;top:0"><path d="M1.8 4.5l2.3 2.8l5.5-5" stroke="#000" stroke-width="1.1" fill="none"/></svg></div><div style="position:absolute;left:34.73px;top:391.07px;font-size:14.50px;font-weight:bold;color:#000;white-space:nowrap;line-height:1;transform:scaleX(0.9487);transform-origin:0 0;">via3</div><div style="position:absolute;left:16px;top:411px;width:136.6px;height:25px;background:#ffffff;"></div><div style="position:absolute;left:16px;top:411px;width:136.6px;height:1px;background:#d2cdd0;"></div><div style="position:absolute;left:152.6px;top:412px;width:34.599999999999994px;height:24px;background:#a8f8b8;"><div style="position:absolute;left:2.3px;top:2px;width:30.4px;height:20px;background:#000;overflow:hidden"><svg width="30" height="20" style="position:absolute;left:0;top:0" shape-rendering="crispEdges"><defs><pattern id="pd3" width="8" height="8" patternUnits="userSpaceOnUse"><rect x="3" y="2" width="2" height="4" fill="#a8f8b8"/></pattern></defs><rect width="30" height="20" fill="url(#pd3)"/></svg></div></div><div style="position:absolute;left:16.4px;top:417.2px;width:12.100000000000001px;height:12.400000000000034px;background:#fff;border-left:1.5px solid #000;border-top:1.5px solid #000;box-sizing:border-box;"><svg width="12" height="12" style="position:absolute;left:0;top:0"><path d="M1.8 4.5l2.3 2.8l5.5-5" stroke="#000" stroke-width="1.1" fill="none"/></svg></div><div style="position:absolute;left:34.73px;top:416.07px;font-size:14.50px;font-weight:bold;color:#000;white-space:nowrap;line-height:1;transform:scaleX(0.9535);transform-origin:0 0;">metal3</div><div style="position:absolute;left:16px;top:436px;width:136.6px;height:25px;background:#f3eef1;"></div><div style="position:absolute;left:16px;top:436px;width:136.6px;height:1px;background:#d2cdd0;"></div><div style="position:absolute;left:152.6px;top:436.5px;width:34.0px;height:24.5px;background:#a8ffb0;"></div><div style="position:absolute;left:16.4px;top:442.2px;width:12.100000000000001px;height:12.400000000000034px;background:#fff;border-left:1.5px solid #000;border-top:1.5px solid #000;box-sizing:border-box;"><svg width="12" height="12" style="position:absolute;left:0;top:0"><path d="M1.8 4.5l2.3 2.8l5.5-5" stroke="#000" stroke-width="1.1" fill="none"/></svg></div><div style="position:absolute;left:34.73px;top:441.07px;font-size:14.50px;font-weight:bold;color:#000;white-space:nowrap;line-height:1;transform:scaleX(0.9487);transform-origin:0 0;">via2</div><div style="position:absolute;left:16px;top:461px;width:136.6px;height:25px;background:#ffffff;"></div><div style="position:absolute;left:16px;top:461px;width:136.6px;height:1px;background:#d2cdd0;"></div><div style="position:absolute;left:152.6px;top:462px;width:34.599999999999994px;height:24px;background:#00ffff;"><div style="position:absolute;left:2.3px;top:2px;width:30.4px;height:20px;background:#000;overflow:hidden"><svg width="30" height="20" style="position:absolute;left:0;top:0" shape-rendering="crispEdges"><defs><pattern id="pdt00ffff" width="8" height="8" patternUnits="userSpaceOnUse"><rect x="0" y="0" width="1" height="1" fill="#00ffff"/><rect x="5" y="0" width="1" height="1" fill="#00ffff"/><rect x="4" y="1" width="1" height="1" fill="#00ffff"/><rect x="1" y="4" width="1" height="1" fill="#00ffff"/><rect x="4" y="4" width="1" height="1" fill="#00ffff"/><rect x="0" y="5" width="1" height="1" fill="#00ffff"/><rect x="5" y="5" width="1" height="1" fill="#00ffff"/></pattern></defs><rect width="30" height="20" fill="url(#pdt00ffff)"/></svg></div></div><div style="position:absolute;left:16.4px;top:467.2px;width:12.100000000000001px;height:12.400000000000034px;background:#fff;border-left:1.5px solid #000;border-top:1.5px solid #000;box-sizing:border-box;"><svg width="12" height="12" style="position:absolute;left:0;top:0"><path d="M1.8 4.5l2.3 2.8l5.5-5" stroke="#000" stroke-width="1.1" fill="none"/></svg></div><div style="position:absolute;left:34.73px;top:466.07px;font-size:14.50px;font-weight:bold;color:#000;white-space:nowrap;line-height:1;transform:scaleX(0.9535);transform-origin:0 0;">metal2</div><div style="position:absolute;left:16px;top:486px;width:136.6px;height:25px;background:#f3eef1;"></div><div style="position:absolute;left:16px;top:486px;width:136.6px;height:1px;background:#d2cdd0;"></div><div style="position:absolute;left:152.6px;top:486.5px;width:34.0px;height:24.5px;background:#ff66b8;"></div><div style="position:absolute;left:16.4px;top:492.2px;width:12.100000000000001px;height:12.400000000000034px;background:#fff;border-left:1.5px solid #000;border-top:1.5px solid #000;box-sizing:border-box;"><svg width="12" height="12" style="position:absolute;left:0;top:0"><path d="M1.8 4.5l2.3 2.8l5.5-5" stroke="#000" stroke-width="1.1" fill="none"/></svg></div><div style="position:absolute;left:34.73px;top:491.07px;font-size:14.50px;font-weight:bold;color:#000;white-space:nowrap;line-height:1;transform:scaleX(0.9053);transform-origin:0 0;">via1</div><div style="position:absolute;left:16px;top:511px;width:136.6px;height:25px;background:#ffffff;"></div><div style="position:absolute;left:16px;top:511px;width:136.6px;height:1px;background:#d2cdd0;"></div><div style="position:absolute;left:152.6px;top:512px;width:34.599999999999994px;height:24px;background:#00d000;"><div style="position:absolute;left:2.3px;top:2px;width:30.4px;height:20px;background:#000;overflow:hidden"><svg width="30" height="20" style="position:absolute;left:0;top:0" shape-rendering="crispEdges"><defs><pattern id="pbx00d000" width="8" height="8" patternUnits="userSpaceOnUse"><path d="M0 0h4v3H0z M1 1v1h2V1z" fill="#00d000" fill-rule="evenodd"/><rect x="4" y="4" width="3" height="1" fill="#00d000"/><rect x="0" y="5" width="3" height="1" fill="#00d000"/><rect x="4" y="6" width="3" height="1" fill="#00d000"/></pattern></defs><rect width="30" height="20" fill="url(#pbx00d000)"/></svg></div></div><div style="position:absolute;left:16.4px;top:517.2px;width:12.100000000000001px;height:12.399999999999977px;background:#fff;border-left:1.5px solid #000;border-top:1.5px solid #000;box-sizing:border-box;"><svg width="12" height="12" style="position:absolute;left:0;top:0"><path d="M1.8 4.5l2.3 2.8l5.5-5" stroke="#000" stroke-width="1.1" fill="none"/></svg></div><div style="position:absolute;left:34.73px;top:516.07px;font-size:14.50px;font-weight:bold;color:#000;white-space:nowrap;line-height:1;transform:scaleX(0.9281);transform-origin:0 0;">metal1</div><div style="position:absolute;left:16px;top:536px;width:136.6px;height:25px;background:#f3eef1;"></div><div style="position:absolute;left:16px;top:536px;width:136.6px;height:1px;background:#d2cdd0;"></div><div style="position:absolute;left:152.6px;top:536.5px;width:34.0px;height:24.5px;background:#ffaa00;"></div><div style="position:absolute;left:16.4px;top:542.2px;width:12.100000000000001px;height:12.399999999999977px;background:#fff;border-left:1.5px solid #000;border-top:1.5px solid #000;box-sizing:border-box;"></div><div style="position:absolute;left:33.29px;top:543.01px;font-size:13.30px;font-weight:normal;color:#000;white-space:nowrap;line-height:1;transform:scaleX(1.0644);transform-origin:0 0;">contact</div><div style="position:absolute;left:16px;top:561px;width:136.6px;height:25px;background:#ffffff;"></div><div style="position:absolute;left:16px;top:561px;width:136.6px;height:1px;background:#d2cdd0;"></div><div style="position:absolute;left:152.6px;top:562px;width:34.599999999999994px;height:24px;background:#ff1010;"><div style="position:absolute;left:2.3px;top:2px;width:30.4px;height:20px;background:#000;overflow:hidden"><svg width="30" height="20" style="position:absolute;left:0;top:0" shape-rendering="crispEdges"><defs><pattern id="pbxff1010" width="8" height="8" patternUnits="userSpaceOnUse"><path d="M0 0h4v3H0z M1 1v1h2V1z" fill="#ff1010" fill-rule="evenodd"/><rect x="4" y="4" width="3" height="1" fill="#ff1010"/><rect x="0" y="5" width="3" height="1" fill="#ff1010"/><rect x="4" y="6" width="3" height="1" fill="#ff1010"/></pattern></defs><rect width="30" height="20" fill="url(#pbxff1010)"/></svg></div></div><div style="position:absolute;left:16.4px;top:567.2px;width:12.100000000000001px;height:12.399999999999977px;background:#fff;border-left:1.5px solid #000;border-top:1.5px solid #000;box-sizing:border-box;"></div><div style="position:absolute;left:33.29px;top:568.01px;font-size:13.30px;font-weight:normal;color:#000;white-space:nowrap;line-height:1;transform:scaleX(1.0014);transform-origin:0 0;">poly1</div><div style="position:absolute;left:16px;top:586px;width:136.6px;height:25px;background:#f3eef1;"></div><div style="position:absolute;left:16px;top:586px;width:136.6px;height:1px;background:#d2cdd0;"></div><div style="position:absolute;left:152.6px;top:587px;width:34.599999999999994px;height:24px;background:#ffaa00;"><div style="position:absolute;left:2.3px;top:2px;width:30.4px;height:20px;background:#000;overflow:hidden"><svg width="30" height="20" style="position:absolute;left:0;top:0" shape-rendering="crispEdges"><defs><pattern id="psd" width="8" height="8" patternUnits="userSpaceOnUse"><rect x="1" y="1" width="2" height="1" fill="#ffaa00"/><rect x="5" y="3" width="1" height="1" fill="#ffaa00"/></pattern></defs><rect width="30" height="20" fill="url(#psd)"/></svg></div></div><div style="position:absolute;left:16.4px;top:592.2px;width:12.100000000000001px;height:12.399999999999977px;background:#fff;border-left:1.5px solid #000;border-top:1.5px solid #000;box-sizing:border-box;"></div><div style="position:absolute;left:33.29px;top:593.01px;font-size:13.30px;font-weight:normal;color:#000;white-space:nowrap;line-height:1;transform:scaleX(1.0559);transform-origin:0 0;">diff</div><div style="position:absolute;left:16px;top:611px;width:136.6px;height:25px;background:#f3eef1;"></div><div style="position:absolute;left:16px;top:611px;width:136.6px;height:1px;background:#d2cdd0;"></div><div style="position:absolute;left:152.6px;top:612px;width:34.599999999999994px;height:24px;background:#1090ff;"><div style="position:absolute;left:2.3px;top:2px;width:30.4px;height:20px;background:#000;overflow:hidden"></div></div><div style="position:absolute;left:16.4px;top:617.2px;width:12.100000000000001px;height:12.399999999999977px;background:#fff;border-left:1.5px solid #000;border-top:1.5px solid #000;box-sizing:border-box;"></div><div style="position:absolute;left:33.29px;top:618.01px;font-size:13.30px;font-weight:normal;color:#000;white-space:nowrap;line-height:1;transform:scaleX(1.0395);transform-origin:0 0;">nwell</div><div style="position:absolute;left:16px;top:636px;width:136.6px;height:25px;background:#f3eef1;"></div><div style="position:absolute;left:16px;top:636px;width:136.6px;height:1px;background:#d2cdd0;"></div><div style="position:absolute;left:152.6px;top:637px;width:34.599999999999994px;height:24px;background:#0000ff;"><div style="position:absolute;left:2.3px;top:2px;width:30.4px;height:20px;background:#000;overflow:hidden"></div></div><div style="position:absolute;left:16.4px;top:642.2px;width:12.100000000000001px;height:12.399999999999977px;background:#fff;border-left:1.5px solid #000;border-top:1.5px solid #000;box-sizing:border-box;"></div><div style="position:absolute;left:33.79px;top:643.01px;font-size:13.30px;font-weight:normal;color:#000;white-space:nowrap;line-height:1;transform:scaleX(1.0526);transform-origin:0 0;">pimpl</div><div style="position:absolute;left:16px;top:661px;width:136.6px;height:25px;background:#f3eef1;"></div><div style="position:absolute;left:16px;top:661px;width:136.6px;height:1px;background:#d2cdd0;"></div><div style="position:absolute;left:152.6px;top:661px;width:34.0px;height:25.5px;background:#000;"><div style="position:absolute;left:2px;top:2px;right:0;bottom:2px;border:1px solid #ff8080;"></div></div><div style="position:absolute;left:16.4px;top:667.2px;width:12.100000000000001px;height:12.399999999999977px;background:#fff;border-left:1.5px solid #000;border-top:1.5px solid #000;box-sizing:border-box;"></div><div style="position:absolute;left:33.79px;top:668.01px;font-size:13.30px;font-weight:normal;color:#000;white-space:nowrap;line-height:1;transform:scaleX(1.0536);transform-origin:0 0;text-decoration:underline;text-decoration-thickness:1px;text-underline-offset:1.2px;">UDOS_metal2</div><div style="position:absolute;left:16px;top:686px;width:136.6px;height:25px;background:#f3eef1;"></div><div style="position:absolute;left:16px;top:686px;width:136.6px;height:1px;background:#d2cdd0;"></div><div style="position:absolute;left:152.6px;top:687px;width:34.599999999999994px;height:24px;background:#ffd0ff;"><div style="position:absolute;left:2.3px;top:2px;width:30.4px;height:20px;background:#000;overflow:hidden"></div></div><div style="position:absolute;left:16.4px;top:692.2px;width:12.100000000000001px;height:12.399999999999977px;background:#fff;border-left:1.5px solid #000;border-top:1.5px solid #000;box-sizing:border-box;"><svg width="12" height="12" style="position:absolute;left:0;top:0"><path d="M1.8 4.5l2.3 2.8l5.5-5" stroke="#000" stroke-width="1.1" fill="none"/></svg></div><div style="position:absolute;left:34.40px;top:691.07px;font-size:14.50px;font-weight:bold;color:#000;white-space:nowrap;line-height:1;transform:scaleX(0.9651);transform-origin:0 0;text-decoration:underline;text-decoration-thickness:1.6px;text-underline-offset:1.2px;">&#39; UDOS_metal1 &#39;</div><div style="position:absolute;left:16px;top:711px;width:136.6px;height:25px;background:#f3eef1;"></div><div style="position:absolute;left:16px;top:711px;width:136.6px;height:1px;background:#d2cdd0;"></div><div style="position:absolute;left:152.6px;top:712px;width:34.599999999999994px;height:24px;background:#00ffff;"><div style="position:absolute;left:2.3px;top:2px;width:30.4px;height:20px;background:#000;overflow:hidden"></div></div><div style="position:absolute;left:16.4px;top:717.2px;width:12.100000000000001px;height:12.399999999999977px;background:#fff;border-left:1.5px solid #000;border-top:1.5px solid #000;box-sizing:border-box;"><svg width="12" height="12" style="position:absolute;left:0;top:0"><path d="M1.8 4.5l2.3 2.8l5.5-5" stroke="#000" stroke-width="1.1" fill="none"/></svg></div><div style="position:absolute;left:34.73px;top:716.07px;font-size:14.50px;font-weight:bold;color:#000;white-space:nowrap;line-height:1;transform:scaleX(0.9577);transform-origin:0 0;text-decoration:underline;text-decoration-thickness:1.6px;text-underline-offset:1.2px;">UDOS_metal4</div><div style="position:absolute;left:16px;top:736px;width:136.6px;height:25px;background:#f3eef1;"></div><div style="position:absolute;left:16px;top:736px;width:136.6px;height:1px;background:#d2cdd0;"></div><div style="position:absolute;left:152.6px;top:737px;width:34.599999999999994px;height:24px;background:#c8ff00;"><div style="position:absolute;left:2.3px;top:2px;width:30.4px;height:20px;background:#000;overflow:hidden"></div></div><div style="position:absolute;left:16.4px;top:742.2px;width:12.100000000000001px;height:12.399999999999977px;background:#fff;border-left:1.5px solid #000;border-top:1.5px solid #000;box-sizing:border-box;"><svg width="12" height="12" style="position:absolute;left:0;top:0"><path d="M1.8 4.5l2.3 2.8l5.5-5" stroke="#000" stroke-width="1.1" fill="none"/></svg></div><div style="position:absolute;left:34.73px;top:741.07px;font-size:14.50px;font-weight:bold;color:#000;white-space:nowrap;line-height:1;transform:scaleX(0.9577);transform-origin:0 0;text-decoration:underline;text-decoration-thickness:1.6px;text-underline-offset:1.2px;">UDOS_metal3</div><div style="position:absolute;left:16px;top:761px;width:136.6px;height:25px;background:#ffffff;"></div><div style="position:absolute;left:16px;top:761px;width:136.6px;height:1px;background:#d2cdd0;"></div><div style="position:absolute;left:152.6px;top:762px;width:34.599999999999994px;height:24px;background:#ffff00;"><div style="position:absolute;left:2.3px;top:2px;width:30.4px;height:20px;background:#000;overflow:hidden"></div></div><div style="position:absolute;left:16.4px;top:767.2px;width:12.100000000000001px;height:12.399999999999977px;background:#fff;border-left:1.5px solid #000;border-top:1.5px solid #000;box-sizing:border-box;"><svg width="12" height="12" style="position:absolute;left:0;top:0"><path d="M1.8 4.5l2.3 2.8l5.5-5" stroke="#000" stroke-width="1.1" fill="none"/></svg></div><div style="position:absolute;left:33.57px;top:766.07px;font-size:14.50px;font-weight:bold;color:#000;white-space:nowrap;line-height:1;font-style:italic;transform:scaleX(0.9763);transform-origin:0 0;">/N162731</div><div style="position:absolute;left:16px;top:786px;width:171px;height:17px;background:#f4eff2;"></div><div style="position:absolute;left:17.5px;top:787.6px;width:13.100000000000001px;height:15.100000000000023px;border-right:1.5px solid #000;border-bottom:1.5px solid #000;box-sizing:border-box;"><div style="position:absolute;left:4px;top:4.5px;width:0;height:0;border-top:3px solid transparent;border-bottom:3px solid transparent;border-right:3.5px solid #000"></div></div><div style="position:absolute;left:30.6px;top:787.6px;width:139.9px;height:15.100000000000023px;border-left:1px solid #000;border-right:1.5px solid #000;border-bottom:1.5px solid #000;box-sizing:border-box;"></div><div style="position:absolute;left:171.5px;top:787.6px;width:15.099999999999994px;height:15.100000000000023px;border-right:1.5px solid #000;border-bottom:1.5px solid #000;box-sizing:border-box;"><div style="position:absolute;left:5.5px;top:4.5px;width:0;height:0;border-top:3px solid transparent;border-bottom:3px solid transparent;border-left:3.5px solid #000"></div></div><div style="position:absolute;left:13px;top:803.5px;width:191px;height:1.0px;background:#777;"></div><div style="position:absolute;left:209.2px;top:121.2px;width:1.200000000000017px;height:686.0px;background:#2a2a2a;"></div><div style="position:absolute;left:210.4px;top:121.3px;width:0.9000000000000057px;height:685.9000000000001px;background:#fbf9fa;"></div><svg style="position:absolute;left:211px;top:123px" width="742" height="684" viewBox="211 123 742 684" shape-rendering="auto"><defs>
<pattern id="m3" width="8" height="8" patternUnits="userSpaceOnUse" x="6" y="1.3"><rect x="0" y="0" width="2" height="4" fill="#a0f0b0"/></pattern>
<pattern id="m2" width="8" height="8" patternUnits="userSpaceOnUse" x="4.1" y="6.3"><path d="M0 0h1v1H0zM5 0h1v1H5zM4 1h1v1H4zM1 4h1v1H1zM4 4h1v1H4zM0 5h1v1H0zM5 5h1v1H5z" fill="#00ffff"/></pattern>
<pattern id="m1" width="8" height="8" patternUnits="userSpaceOnUse" x="-0.55" y="7.45"><path d="M0 0h4v3H0zM1 1v1h2V1z" fill="#00dd00" fill-rule="evenodd"/><path d="M4 4h3v1H4zM0 5h3v1H0zM4 6h3v1H4z" fill="#00dd00"/></pattern>
<pattern id="m4" width="8" height="8" patternUnits="userSpaceOnUse" x="0.55" y="0"><path d="M0 0L0.55 0L8 7.45L8 8L7.45 8L0 0.55Z M7.45 0L8 0L8 0.55Z M0 7.45L0.55 8L0 8Z" fill="#ff5a00" shape-rendering="auto"/></pattern>
</defs><g transform="translate(0.3,-0.3)"><rect x="211" y="123" width="742" height="684" fill="#000"/><path d="M566 445H712V813H674V513H566Z" fill="url(#m1)"/><rect x="501" y="595" width="129" height="218" fill="url(#m1)"/><rect x="501.5" y="595.5" width="128" height="217" fill="none" stroke="#00dd00" stroke-width="1"/><rect x="874" y="413" width="86" height="68" fill="url(#m1)"/><rect x="874.5" y="413.5" width="85" height="67" fill="none" stroke="#00dd00" stroke-width="1"/><rect x="928" y="480" width="32" height="333" fill="url(#m1)"/><rect x="928.5" y="480.5" width="31" height="332" fill="none" stroke="#00dd00" stroke-width="1"/><rect x="756" y="759" width="129" height="54" fill="url(#m1)"/><rect x="756.5" y="759.5" width="128" height="53" fill="none" stroke="#00dd00" stroke-width="1"/><rect x="249" y="600" width="41" height="213" fill="url(#m1)"/><rect x="249.5" y="600.5" width="40" height="212" fill="none" stroke="#00dd00" stroke-width="1"/><path d="M566.5 445.5H711.5M566.5 445.5V512.5" stroke="#00dd00" fill="none"/><rect x="654" y="470" width="1" height="38" fill="#00dd00"/><rect x="567" y="459" width="44" height="41" fill="#ff66b8"/><rect x="665" y="459" width="44" height="41" fill="#ff66b8"/><rect x="877" y="426" width="38" height="43" fill="#ff66b8"/><rect x="544" y="713" width="42" height="44" fill="#ff66b8"/><rect x="731" y="100" width="92" height="29" fill="url(#m2)"/><rect x="731.5" y="100.5" width="91" height="28" fill="none" stroke="#00ffff" stroke-width="1"/><rect x="822" y="100" width="138" height="29" fill="url(#m2)"/><rect x="822.5" y="100.5" width="137" height="28" fill="none" stroke="#00ffff" stroke-width="1"/><rect x="211" y="213" width="749" height="44" fill="url(#m2)"/><rect x="211" y="298" width="749" height="44" fill="url(#m2)"/><rect x="460" y="308" width="122" height="44" fill="url(#m2)"/><rect x="460.5" y="308.5" width="121" height="43" fill="none" stroke="#00ffff" stroke-width="1"/><path d="M200 468H544V457H733V510H200Z" fill="url(#m2)"/><rect x="200.5" y="468.5" width="529" height="40" fill="none" stroke="#00ffff" stroke-width="1"/><rect x="543.5" y="468.5" width="186" height="32" fill="none" stroke="#00ffff" stroke-width="1"/><rect x="794" y="426" width="166" height="43" fill="url(#m2)"/><rect x="794.5" y="426.5" width="165" height="42" fill="none" stroke="#00ffff" stroke-width="1"/><rect x="200" y="553" width="760" height="43" fill="url(#m2)"/><rect x="200.5" y="553.5" width="759" height="42" fill="none" stroke="#00ffff" stroke-width="1"/><rect x="200" y="683" width="536" height="104" fill="url(#m2)"/><rect x="200.5" y="683.5" width="535" height="103" fill="none" stroke="#00ffff" stroke-width="1"/><rect x="735" y="683" width="225" height="104" fill="url(#m2)"/><rect x="735.5" y="683.5" width="224" height="103" fill="none" stroke="#00ffff" stroke-width="1"/><rect x="200" y="786" width="111" height="27" fill="url(#m2)"/><rect x="200.5" y="786.5" width="110" height="26" fill="none" stroke="#00ffff" stroke-width="1"/><rect x="310" y="786" width="650" height="27" fill="url(#m2)"/><rect x="310.5" y="786.5" width="649" height="26" fill="none" stroke="#00ffff" stroke-width="1"/><rect x="249" y="100" width="41" height="713" fill="url(#m3)"/><rect x="249.5" y="100.5" width="40" height="712" fill="none" stroke="#a0f0b0" stroke-width="1"/><rect x="331" y="100" width="44" height="713" fill="url(#m3)"/><rect x="331.5" y="100.5" width="43" height="712" fill="none" stroke="#a0f0b0" stroke-width="1"/><rect x="416" y="285" width="142" height="91" fill="url(#m3)"/><rect x="416.5" y="285.5" width="141" height="90" fill="none" stroke="#a0f0b0" stroke-width="1"/><rect x="416" y="285" width="44" height="528" fill="url(#m3)"/><rect x="416.5" y="285.5" width="43" height="527" fill="none" stroke="#a0f0b0" stroke-width="1"/><rect x="671" y="100" width="43" height="713" fill="url(#m3)"/><rect x="671.5" y="100.5" width="42" height="712" fill="none" stroke="#a0f0b0" stroke-width="1"/><rect x="904" y="100" width="44" height="393" fill="url(#m3)"/><rect x="904.5" y="100.5" width="43" height="392" fill="none" stroke="#a0f0b0" stroke-width="1"/><rect x="818" y="401" width="142" height="92" fill="url(#m3)"/><rect x="818.5" y="401.5" width="141" height="91" fill="none" stroke="#a0f0b0" stroke-width="1"/><rect x="756" y="100" width="44" height="54" fill="url(#m3)"/><rect x="756.5" y="100.5" width="43" height="53" fill="none" stroke="#a0f0b0" stroke-width="1"/><rect x="576" y="559" width="44" height="189" fill="url(#m3)"/><rect x="576.5" y="559.5" width="43" height="188" fill="none" stroke="#a0f0b0" stroke-width="1"/><rect x="586" y="595" width="44" height="218" fill="url(#m3)"/><rect x="586.5" y="595.5" width="43" height="217" fill="none" stroke="#a0f0b0" stroke-width="1"/><rect x="416" y="308" width="44" height="44" fill="#a8ffb0"/><rect x="514" y="308" width="44" height="44" fill="#a8ffb0"/><rect x="818" y="426" width="43" height="43" fill="#a8ffb0"/><rect x="915" y="426" width="45" height="43" fill="#a8ffb0"/><rect x="756" y="100" width="44" height="29" fill="#a8ffb0"/><rect x="576" y="583" width="44" height="44" fill="#a4cdff"/><rect x="576" y="680" width="44" height="44" fill="#a4cdff"/><rect x="211" y="213" width="749" height="44" fill="url(#m4)"/><rect x="211.5" y="213.5" width="748" height="43" fill="none" stroke="#ff5a00" stroke-width="1"/><rect x="211" y="298" width="749" height="44" fill="url(#m4)"/><rect x="211.5" y="298.5" width="748" height="43" fill="none" stroke="#ff5a00" stroke-width="1"/><rect x="586" y="638" width="374" height="43" fill="url(#m4)"/><rect x="586.5" y="638.5" width="373" height="42" fill="none" stroke="#ff5a00" stroke-width="1"/><rect x="576" y="583" width="44" height="141" fill="url(#m4)"/><rect x="576.5" y="583.5" width="43" height="140" fill="none" stroke="#ff5a00" stroke-width="1"/><rect x="211" y="123" width="39" height="684" fill="#00aa00"/><path d="M200 468H544.5V457H732.5V510.2H200" fill="none" stroke="#ffff00" stroke-width="2.7"/><path d="M675 815V512.5H565.5V445.3H711.3V815" fill="none" stroke="#ffff00" stroke-width="2.7"/><rect x="489.5" y="375.5" width="182" height="177.5" fill="none" stroke="#ffc0ff" stroke-width="1.5"/><rect x="486.5" y="372.5" width="6" height="6" fill="none" stroke="#ffc8ff" stroke-width="1.6"/><rect x="668.5" y="372.5" width="6" height="6" fill="none" stroke="#ffc8ff" stroke-width="1.6"/><rect x="486.5" y="550" width="6" height="6" fill="none" stroke="#ffc8ff" stroke-width="1.6"/><rect x="668.5" y="550" width="6" height="6" fill="none" stroke="#ffc8ff" stroke-width="1.6"/><path d="M525.5 462V440.5M525.5 446C527 441.5 531 440.3 534 440.5C537 440.7 538 443 538 446.5V462M538 446C540 441.5 543.5 440.3 546.5 440.5C549.5 440.7 550.2 443 550.2 446.5V462M558.6 451.3H572.6C572.6 444.5 569.5 440.5 565.5 440.5C561 440.5 558 444.5 558 451.2C558 458 561.5 462 565.6 462C569 462 571.6 459.5 572.4 456.3M577.4 435V457.5C577.4 461 579 462 583.5 461.6M573.6 441.3H583.4M591.6 446.2C592.2 442.3 595 440.5 598.8 440.5C604 440.5 606.2 442.8 606.2 447V458C606.2 460.5 607 461.5 608.6 461.5M606 450.2C602 451.5 597 451.2 593.8 452.6C590.8 454 590.2 456 590.6 458.2C591.2 461 593.6 462.5 597.2 462.1C601 461.7 605 459.2 606 455M613.7 433V462M630.2 433.2V462M630.2 433.5C628.5 437 625.5 439.3 622.6 440.6" fill="none" stroke="#ffc8ff" stroke-width="2.1" shape-rendering="auto"/><path d="M582 435V494.5M551.5 465.5H611" stroke="#ff0000" stroke-width="1"/></g></svg><div style="position:absolute;left:187.4px;top:233.2px;width:247.70000000000002px;height:468.40000000000003px;background:#5e5c5e;"></div><div style="position:absolute;left:434.2px;top:233.2px;width:0.9000000000000341px;height:468.40000000000003px;background:#000;"></div><div style="position:absolute;left:187.4px;top:233.2px;width:246.99999999999997px;height:1.700000000000017px;background:#fff;"></div><div style="position:absolute;left:187.4px;top:233.2px;width:1.0px;height:468.40000000000003px;background:#fff;"></div><div style="position:absolute;left:188.4px;top:253.5px;width:244.6px;height:447.1px;background:#f4eff2;border-top:2px solid #fff;border-right:2.2px solid #2a2a2a;border-bottom:2.4px solid #111;box-sizing:border-box;"></div><div style="position:absolute;left:190.93px;top:237.58px;font-size:13.36px;font-weight:normal;color:#e4e2e4;white-space:nowrap;line-height:1;transform:scaleX(1.0537);transform-origin:0 0;">Data Locator / KEdit</div><div style="position:absolute;left:416.3px;top:236.9px;width:15.0px;height:14.5px;background:#f8f5f7;border-right:1.8px solid #000;border-bottom:1.8px solid #000;box-sizing:border-box;"><svg width="13" height="13" style="position:absolute;left:0;top:0"><path d="M4 4l5 5M9 4l-5 5" stroke="#000" stroke-width="1.7"/></svg></div><div style="position:absolute;left:191.5px;top:264.3px;width:12.199999999999989px;height:12.099999999999966px;background:#fff;border-left:1.5px solid #000;border-top:1.5px solid #000;box-sizing:border-box;"></div><div style="position:absolute;left:210.02px;top:263.48px;font-size:14.20px;font-weight:normal;color:#000;white-space:nowrap;line-height:1;transform:scaleX(0.9768);transform-origin:0 0;">Select All</div><div style="position:absolute;left:273.3px;top:258.3px;width:154.7px;height:22.69999999999999px;background:#f8f5f7;border-left:1.8px solid #000;border-top:1.8px solid #000;box-sizing:border-box;overflow:hidden;"></div><div style="position:absolute;left:273.87px;top:264.34px;font-size:14.00px;font-weight:normal;color:#000;white-space:nowrap;line-height:1;transform:scaleX(1.0127);transform-origin:0 0;">min/cam_config/result.vl</div><div style="position:absolute;left:273.3px;top:258.3px;width:1.8999999999999773px;height:22.69999999999999px;background:#000;"></div><div style="position:absolute;left:191.8px;top:285.1px;width:237.09999999999997px;height:381.69999999999993px;background:#fff;border-left:1.8px solid #000;border-top:1.8px solid #000;box-sizing:border-box;"></div><div style="position:absolute;left:193.6px;top:286.9px;width:218.9px;height:23.400000000000034px;background:#f6f2f4;"></div><div style="position:absolute;left:243.48px;top:286.9px;width:1.0px;height:363.4px;background:#d4d0d2;"></div><div style="position:absolute;left:295.3px;top:286.9px;width:1.0px;height:363.4px;background:#d4d0d2;"></div><div style="position:absolute;left:397.39px;top:286.9px;width:1.0px;height:363.4px;background:#d4d0d2;"></div><div style="position:absolute;left:193.6px;top:309.8px;width:218.9px;height:1.0px;background:#d4d0d2;"></div><div style="position:absolute;left:199.11px;top:290.62px;font-size:15.20px;font-weight:bold;color:#000;white-space:nowrap;line-height:1;transform:scaleX(0.9184);transform-origin:0 0;">Index</div><div style="position:absolute;left:250.32px;top:290.62px;font-size:15.20px;font-weight:bold;color:#000;white-space:nowrap;line-height:1;transform:scaleX(0.9100);transform-origin:0 0;">Label</div><div style="position:absolute;left:302.20px;top:290.39px;font-size:15.20px;font-weight:bold;color:#000;white-space:nowrap;line-height:1;transform:scaleX(0.9331);transform-origin:0 0;">Virtual Layer</div><div style="position:absolute;left:403.45px;top:290.39px;font-size:15.20px;font-weight:bold;color:#000;white-space:nowrap;line-height:1;transform:scaleX(0.8213);transform-origin:0 0;">T</div><div style="position:absolute;left:193.6px;top:329.8px;width:218.9px;height:1.0px;background:#d4d0d2;"></div><div style="position:absolute;left:234.21px;top:315.49px;font-size:13.00px;font-weight:normal;color:#000;white-space:nowrap;line-height:1;transform:scaleX(1.0656);transform-origin:0 0;">2</div><div style="position:absolute;left:247.43px;top:315.49px;font-size:13.00px;font-weight:normal;color:#000;white-space:nowrap;line-height:1;transform:scaleX(1.0656);transform-origin:0 0;">metal4</div><div style="position:absolute;left:299.03px;top:315.49px;font-size:13.00px;font-weight:normal;color:#000;white-space:nowrap;line-height:1;transform:scaleX(1.0740);transform-origin:0 0;">UDOS_metal4</div><div style="position:absolute;left:401.06px;top:310.3px;width:11.410000000000025px;height:20px;overflow:hidden"><div style="position:absolute;left:0.00px;top:5.19px;font-size:13.00px;font-weight:normal;color:#000;white-space:nowrap;line-height:1;transform:scaleX(1.0656);transform-origin:0 0;">Bo</div></div><div style="position:absolute;left:193.6px;top:349.8px;width:218.9px;height:1.0px;background:#d4d0d2;"></div><div style="position:absolute;left:234.21px;top:335.49px;font-size:13.00px;font-weight:normal;color:#000;white-space:nowrap;line-height:1;transform:scaleX(1.0656);transform-origin:0 0;">3</div><div style="position:absolute;left:247.43px;top:335.49px;font-size:13.00px;font-weight:normal;color:#000;white-space:nowrap;line-height:1;transform:scaleX(1.0656);transform-origin:0 0;">metal4</div><div style="position:absolute;left:299.03px;top:335.49px;font-size:13.00px;font-weight:normal;color:#000;white-space:nowrap;line-height:1;transform:scaleX(1.0740);transform-origin:0 0;">UDOS_metal4</div><div style="position:absolute;left:401.06px;top:330.3px;width:11.410000000000025px;height:20px;overflow:hidden"><div style="position:absolute;left:0.00px;top:5.19px;font-size:13.00px;font-weight:normal;color:#000;white-space:nowrap;line-height:1;transform:scaleX(1.0656);transform-origin:0 0;">Bo</div></div><div style="position:absolute;left:193.6px;top:369.8px;width:218.9px;height:1.0px;background:#d4d0d2;"></div><div style="position:absolute;left:234.21px;top:355.49px;font-size:13.00px;font-weight:normal;color:#000;white-space:nowrap;line-height:1;transform:scaleX(1.0656);transform-origin:0 0;">4</div><div style="position:absolute;left:247.43px;top:355.49px;font-size:13.00px;font-weight:normal;color:#000;white-space:nowrap;line-height:1;transform:scaleX(1.0656);transform-origin:0 0;">metal4</div><div style="position:absolute;left:299.03px;top:355.49px;font-size:13.00px;font-weight:normal;color:#000;white-space:nowrap;line-height:1;transform:scaleX(1.0740);transform-origin:0 0;">UDOS_metal4</div><div style="position:absolute;left:401.06px;top:350.3px;width:11.410000000000025px;height:20px;overflow:hidden"><div style="position:absolute;left:0.00px;top:5.19px;font-size:13.00px;font-weight:normal;color:#000;white-space:nowrap;line-height:1;transform:scaleX(1.0656);transform-origin:0 0;">Bo</div></div><div style="position:absolute;left:193.6px;top:389.8px;width:218.9px;height:1.0px;background:#d4d0d2;"></div><div style="position:absolute;left:234.21px;top:375.49px;font-size:13.00px;font-weight:normal;color:#000;white-space:nowrap;line-height:1;transform:scaleX(1.0656);transform-origin:0 0;">5</div><div style="position:absolute;left:247.43px;top:375.49px;font-size:13.00px;font-weight:normal;color:#000;white-space:nowrap;line-height:1;transform:scaleX(1.0656);transform-origin:0 0;">metal4</div><div style="position:absolute;left:299.03px;top:375.49px;font-size:13.00px;font-weight:normal;color:#000;white-space:nowrap;line-height:1;transform:scaleX(1.0740);transform-origin:0 0;">UDOS_metal4</div><div style="position:absolute;left:401.06px;top:370.3px;width:11.410000000000025px;height:20px;overflow:hidden"><div style="position:absolute;left:0.00px;top:5.19px;font-size:13.00px;font-weight:normal;color:#000;white-space:nowrap;line-height:1;transform:scaleX(1.0656);transform-origin:0 0;">Bo</div></div><div style="position:absolute;left:193.6px;top:409.8px;width:218.9px;height:1.0px;background:#d4d0d2;"></div><div style="position:absolute;left:234.21px;top:395.49px;font-size:13.00px;font-weight:normal;color:#000;white-space:nowrap;line-height:1;transform:scaleX(1.0656);transform-origin:0 0;">6</div><div style="position:absolute;left:247.43px;top:395.49px;font-size:13.00px;font-weight:normal;color:#000;white-space:nowrap;line-height:1;transform:scaleX(1.0656);transform-origin:0 0;">metal3</div><div style="position:absolute;left:299.03px;top:395.49px;font-size:13.00px;font-weight:normal;color:#000;white-space:nowrap;line-height:1;transform:scaleX(1.0740);transform-origin:0 0;">UDOS_metal3</div><div style="position:absolute;left:401.06px;top:390.3px;width:11.410000000000025px;height:20px;overflow:hidden"><div style="position:absolute;left:0.00px;top:5.19px;font-size:13.00px;font-weight:normal;color:#000;white-space:nowrap;line-height:1;transform:scaleX(1.0656);transform-origin:0 0;">Bo</div></div><div style="position:absolute;left:193.6px;top:429.8px;width:218.9px;height:1.0px;background:#d4d0d2;"></div><div style="position:absolute;left:234.21px;top:415.49px;font-size:13.00px;font-weight:normal;color:#000;white-space:nowrap;line-height:1;transform:scaleX(1.0656);transform-origin:0 0;">7</div><div style="position:absolute;left:247.43px;top:415.49px;font-size:13.00px;font-weight:normal;color:#000;white-space:nowrap;line-height:1;transform:scaleX(1.0656);transform-origin:0 0;">metal3</div><div style="position:absolute;left:299.03px;top:415.49px;font-size:13.00px;font-weight:normal;color:#000;white-space:nowrap;line-height:1;transform:scaleX(1.0740);transform-origin:0 0;">UDOS_metal3</div><div style="position:absolute;left:401.06px;top:410.3px;width:11.410000000000025px;height:20px;overflow:hidden"><div style="position:absolute;left:0.00px;top:5.19px;font-size:13.00px;font-weight:normal;color:#000;white-space:nowrap;line-height:1;transform:scaleX(1.0656);transform-origin:0 0;">Bo</div></div><div style="position:absolute;left:193.6px;top:449.8px;width:218.9px;height:1.0px;background:#d4d0d2;"></div><div style="position:absolute;left:234.21px;top:435.49px;font-size:13.00px;font-weight:normal;color:#000;white-space:nowrap;line-height:1;transform:scaleX(1.0656);transform-origin:0 0;">8</div><div style="position:absolute;left:247.43px;top:435.49px;font-size:13.00px;font-weight:normal;color:#000;white-space:nowrap;line-height:1;transform:scaleX(1.0656);transform-origin:0 0;">metal3</div><div style="position:absolute;left:299.03px;top:435.49px;font-size:13.00px;font-weight:normal;color:#000;white-space:nowrap;line-height:1;transform:scaleX(1.0740);transform-origin:0 0;">UDOS_metal3</div><div style="position:absolute;left:401.06px;top:430.3px;width:11.410000000000025px;height:20px;overflow:hidden"><div style="position:absolute;left:0.00px;top:5.19px;font-size:13.00px;font-weight:normal;color:#000;white-space:nowrap;line-height:1;transform:scaleX(1.0656);transform-origin:0 0;">Bo</div></div><div style="position:absolute;left:193.6px;top:469.8px;width:218.9px;height:1.0px;background:#d4d0d2;"></div><div style="position:absolute;left:234.21px;top:455.49px;font-size:13.00px;font-weight:normal;color:#000;white-space:nowrap;line-height:1;transform:scaleX(1.0656);transform-origin:0 0;">9</div><div style="position:absolute;left:247.43px;top:455.49px;font-size:13.00px;font-weight:normal;color:#000;white-space:nowrap;line-height:1;transform:scaleX(1.0656);transform-origin:0 0;">metal3</div><div style="position:absolute;left:299.03px;top:455.49px;font-size:13.00px;font-weight:normal;color:#000;white-space:nowrap;line-height:1;transform:scaleX(1.0740);transform-origin:0 0;">UDOS_metal3</div><div style="position:absolute;left:401.06px;top:450.3px;width:11.410000000000025px;height:20px;overflow:hidden"><div style="position:absolute;left:0.00px;top:5.19px;font-size:13.00px;font-weight:normal;color:#000;white-space:nowrap;line-height:1;transform:scaleX(1.0656);transform-origin:0 0;">Bo</div></div><div style="position:absolute;left:193.6px;top:489.8px;width:218.9px;height:1.0px;background:#d4d0d2;"></div><div style="position:absolute;left:226.51px;top:475.49px;font-size:13.00px;font-weight:normal;color:#000;white-space:nowrap;line-height:1;transform:scaleX(1.0656);transform-origin:0 0;">10</div><div style="position:absolute;left:247.43px;top:475.49px;font-size:13.00px;font-weight:normal;color:#000;white-space:nowrap;line-height:1;transform:scaleX(1.0656);transform-origin:0 0;">metal3</div><div style="position:absolute;left:299.03px;top:475.49px;font-size:13.00px;font-weight:normal;color:#000;white-space:nowrap;line-height:1;transform:scaleX(1.0740);transform-origin:0 0;">UDOS_metal3</div><div style="position:absolute;left:401.06px;top:470.3px;width:11.410000000000025px;height:20px;overflow:hidden"><div style="position:absolute;left:0.00px;top:5.19px;font-size:13.00px;font-weight:normal;color:#000;white-space:nowrap;line-height:1;transform:scaleX(1.0656);transform-origin:0 0;">Bo</div></div><div style="position:absolute;left:193.6px;top:509.8px;width:218.9px;height:1.0px;background:#d4d0d2;"></div><div style="position:absolute;left:227.54px;top:495.49px;font-size:13.00px;font-weight:normal;color:#000;white-space:nowrap;line-height:1;transform:scaleX(1.0656);transform-origin:0 0;">11</div><div style="position:absolute;left:247.43px;top:495.49px;font-size:13.00px;font-weight:normal;color:#000;white-space:nowrap;line-height:1;transform:scaleX(1.0656);transform-origin:0 0;">metal3</div><div style="position:absolute;left:299.03px;top:495.49px;font-size:13.00px;font-weight:normal;color:#000;white-space:nowrap;line-height:1;transform:scaleX(1.0740);transform-origin:0 0;">UDOS_metal3</div><div style="position:absolute;left:401.06px;top:490.3px;width:11.410000000000025px;height:20px;overflow:hidden"><div style="position:absolute;left:0.00px;top:5.19px;font-size:13.00px;font-weight:normal;color:#000;white-space:nowrap;line-height:1;transform:scaleX(1.0656);transform-origin:0 0;">Bo</div></div><div style="position:absolute;left:193.6px;top:529.8px;width:218.9px;height:1.0px;background:#d4d0d2;"></div><div style="position:absolute;left:226.51px;top:515.49px;font-size:13.00px;font-weight:normal;color:#000;white-space:nowrap;line-height:1;transform:scaleX(1.0656);transform-origin:0 0;">12</div><div style="position:absolute;left:247.43px;top:515.49px;font-size:13.00px;font-weight:normal;color:#000;white-space:nowrap;line-height:1;transform:scaleX(1.0656);transform-origin:0 0;">metal3</div><div style="position:absolute;left:299.03px;top:515.49px;font-size:13.00px;font-weight:normal;color:#000;white-space:nowrap;line-height:1;transform:scaleX(1.0740);transform-origin:0 0;">UDOS_metal3</div><div style="position:absolute;left:401.06px;top:510.3px;width:11.410000000000025px;height:20px;overflow:hidden"><div style="position:absolute;left:0.00px;top:5.19px;font-size:13.00px;font-weight:normal;color:#000;white-space:nowrap;line-height:1;transform:scaleX(1.0656);transform-origin:0 0;">Bo</div></div><div style="position:absolute;left:193.6px;top:549.8px;width:218.9px;height:1.0px;background:#d4d0d2;"></div><div style="position:absolute;left:226.51px;top:535.49px;font-size:13.00px;font-weight:normal;color:#000;white-space:nowrap;line-height:1;transform:scaleX(1.0656);transform-origin:0 0;">13</div><div style="position:absolute;left:247.43px;top:535.49px;font-size:13.00px;font-weight:normal;color:#000;white-space:nowrap;line-height:1;transform:scaleX(1.0656);transform-origin:0 0;">metal3</div><div style="position:absolute;left:299.03px;top:535.49px;font-size:13.00px;font-weight:normal;color:#000;white-space:nowrap;line-height:1;transform:scaleX(1.0740);transform-origin:0 0;">UDOS_metal3</div><div style="position:absolute;left:401.06px;top:530.3px;width:11.410000000000025px;height:20px;overflow:hidden"><div style="position:absolute;left:0.00px;top:5.19px;font-size:13.00px;font-weight:normal;color:#000;white-space:nowrap;line-height:1;transform:scaleX(1.0656);transform-origin:0 0;">Bo</div></div><div style="position:absolute;left:193.6px;top:569.8px;width:218.9px;height:1.0px;background:#d4d0d2;"></div><div style="position:absolute;left:226.51px;top:555.49px;font-size:13.00px;font-weight:normal;color:#000;white-space:nowrap;line-height:1;transform:scaleX(1.0656);transform-origin:0 0;">14</div><div style="position:absolute;left:247.43px;top:555.49px;font-size:13.00px;font-weight:normal;color:#000;white-space:nowrap;line-height:1;transform:scaleX(1.0656);transform-origin:0 0;">metal3</div><div style="position:absolute;left:299.03px;top:555.49px;font-size:13.00px;font-weight:normal;color:#000;white-space:nowrap;line-height:1;transform:scaleX(1.0740);transform-origin:0 0;">UDOS_metal3</div><div style="position:absolute;left:401.06px;top:550.3px;width:11.410000000000025px;height:20px;overflow:hidden"><div style="position:absolute;left:0.00px;top:5.19px;font-size:13.00px;font-weight:normal;color:#000;white-space:nowrap;line-height:1;transform:scaleX(1.0656);transform-origin:0 0;">Bo</div></div><div style="position:absolute;left:193.6px;top:589.8px;width:218.9px;height:1.0px;background:#d4d0d2;"></div><div style="position:absolute;left:226.51px;top:575.49px;font-size:13.00px;font-weight:normal;color:#000;white-space:nowrap;line-height:1;transform:scaleX(1.0656);transform-origin:0 0;">15</div><div style="position:absolute;left:247.43px;top:575.49px;font-size:13.00px;font-weight:normal;color:#000;white-space:nowrap;line-height:1;transform:scaleX(1.0656);transform-origin:0 0;">metal2</div><div style="position:absolute;left:299.03px;top:575.49px;font-size:13.00px;font-weight:normal;color:#000;white-space:nowrap;line-height:1;transform:scaleX(1.0740);transform-origin:0 0;">UDOS_metal2</div><div style="position:absolute;left:401.06px;top:570.3px;width:11.410000000000025px;height:20px;overflow:hidden"><div style="position:absolute;left:0.00px;top:5.19px;font-size:13.00px;font-weight:normal;color:#000;white-space:nowrap;line-height:1;transform:scaleX(1.0656);transform-origin:0 0;">Bo</div></div><div style="position:absolute;left:193.6px;top:609.8px;width:218.9px;height:1.0px;background:#d4d0d2;"></div><div style="position:absolute;left:226.51px;top:595.49px;font-size:13.00px;font-weight:normal;color:#000;white-space:nowrap;line-height:1;transform:scaleX(1.0656);transform-origin:0 0;">16</div><div style="position:absolute;left:247.43px;top:595.49px;font-size:13.00px;font-weight:normal;color:#000;white-space:nowrap;line-height:1;transform:scaleX(1.0656);transform-origin:0 0;">metal2</div><div style="position:absolute;left:299.03px;top:595.49px;font-size:13.00px;font-weight:normal;color:#000;white-space:nowrap;line-height:1;transform:scaleX(1.0740);transform-origin:0 0;">UDOS_metal2</div><div style="position:absolute;left:401.06px;top:590.3px;width:11.410000000000025px;height:20px;overflow:hidden"><div style="position:absolute;left:0.00px;top:5.19px;font-size:13.00px;font-weight:normal;color:#000;white-space:nowrap;line-height:1;transform:scaleX(1.0656);transform-origin:0 0;">Bo</div></div><div style="position:absolute;left:193.6px;top:629.8px;width:218.9px;height:1.0px;background:#d4d0d2;"></div><div style="position:absolute;left:226.51px;top:615.49px;font-size:13.00px;font-weight:normal;color:#000;white-space:nowrap;line-height:1;transform:scaleX(1.0656);transform-origin:0 0;">17</div><div style="position:absolute;left:247.43px;top:615.49px;font-size:13.00px;font-weight:normal;color:#000;white-space:nowrap;line-height:1;transform:scaleX(1.0656);transform-origin:0 0;">metal2</div><div style="position:absolute;left:299.03px;top:615.49px;font-size:13.00px;font-weight:normal;color:#000;white-space:nowrap;line-height:1;transform:scaleX(1.0740);transform-origin:0 0;">UDOS_metal2</div><div style="position:absolute;left:401.06px;top:610.3px;width:11.410000000000025px;height:20px;overflow:hidden"><div style="position:absolute;left:0.00px;top:5.19px;font-size:13.00px;font-weight:normal;color:#000;white-space:nowrap;line-height:1;transform:scaleX(1.0656);transform-origin:0 0;">Bo</div></div><div style="position:absolute;left:193.6px;top:630.8px;width:218.9px;height:19.5px;background:#1f78d2;"></div><div style="position:absolute;left:226.51px;top:635.49px;font-size:13.00px;font-weight:normal;color:#fff;white-space:nowrap;line-height:1;transform:scaleX(1.0656);transform-origin:0 0;">18</div><div style="position:absolute;left:247.43px;top:635.49px;font-size:13.00px;font-weight:normal;color:#fff;white-space:nowrap;line-height:1;transform:scaleX(1.0656);transform-origin:0 0;">metal1</div><div style="position:absolute;left:299.03px;top:635.49px;font-size:13.00px;font-weight:normal;color:#fff;white-space:nowrap;line-height:1;transform:scaleX(1.0740);transform-origin:0 0;">UDOS_metal1</div><div style="position:absolute;left:401.06px;top:630.3px;width:11.410000000000025px;height:20px;overflow:hidden"><div style="position:absolute;left:0.00px;top:5.19px;font-size:13.00px;font-weight:normal;color:#fff;white-space:nowrap;line-height:1;transform:scaleX(1.0656);transform-origin:0 0;">Bo</div></div><div style="position:absolute;left:412.5px;top:286.9px;width:16.100000000000023px;height:363.4px;background:repeating-conic-gradient(#f6f2f4 0% 25%, #e0dbde 0% 50%) 0 0/2px 2px;"></div><div style="position:absolute;left:412.5px;top:286.8px;width:15.0px;height:14.5px;background:#f6f2f4;border-right:1.5px solid #000;border-bottom:1.5px solid #000;box-sizing:border-box;"><div style="position:absolute;left:4px;top:4.5px;width:0;height:0;border-left:3.5px solid transparent;border-right:3.5px solid transparent;border-bottom:3.5px solid #000"></div></div><div style="position:absolute;left:412.5px;top:321.8px;width:15.0px;height:312.2px;background:#f6f2f4;border-right:1.5px solid #000;border-bottom:1.5px solid #000;box-sizing:border-box;"></div><div style="position:absolute;left:412.5px;top:635.5px;width:15.0px;height:14.799999999999955px;background:#f6f2f4;border-right:1.5px solid #000;border-bottom:1.5px solid #000;box-sizing:border-box;"><div style="position:absolute;left:4px;top:5px;width:0;height:0;border-left:3.5px solid transparent;border-right:3.5px solid transparent;border-top:3.5px solid #000"></div></div><div style="position:absolute;left:193.6px;top:650.3px;width:233.9px;height:14.700000000000045px;background:repeating-conic-gradient(#f6f2f4 0% 25%, #e0dbde 0% 50%) 0 0/2px 2px;"></div><div style="position:absolute;left:193.7px;top:651.8px;width:14.5px;height:14.0px;background:#f6f2f4;border-right:1.5px solid #000;border-bottom:1.5px solid #000;box-sizing:border-box;"><div style="position:absolute;left:4.5px;top:4px;width:0;height:0;border-top:3px solid transparent;border-bottom:3px solid transparent;border-right:3.5px solid #000"></div></div><div style="position:absolute;left:208.2px;top:651.8px;width:84.0px;height:14.0px;background:#f6f2f4;border-left:1px solid #000;border-right:1.5px solid #000;border-bottom:1.5px solid #000;box-sizing:border-box;"></div><div style="position:absolute;left:396.3px;top:651.8px;width:15.199999999999989px;height:14.0px;background:#f6f2f4;border-right:1.5px solid #000;border-bottom:1.5px solid #000;box-sizing:border-box;"><div style="position:absolute;left:5.5px;top:4px;width:0;height:0;border-top:3px solid transparent;border-bottom:3px solid transparent;border-left:3.5px solid #000"></div></div><div style="position:absolute;left:412.5px;top:650.3px;width:15.5px;height:15.5px;background:#f4eff2;"></div><div style="position:absolute;left:304.5px;top:670.2px;width:128.5px;height:1.1999999999999318px;background:#000;"></div><div style="position:absolute;left:432px;top:670.2px;width:1.1999999999999886px;height:29.799999999999955px;background:#000;"></div><div style="position:absolute;left:189.6px;top:670.8px;width:58.099999999999994px;height:24.300000000000068px;background:#f4eff2;border-top:1px solid #fff;border-left:1px solid #fff;border-right:1.5px solid #000;border-bottom:1.5px solid #000;box-sizing:border-box;"></div><div style="position:absolute;left:247.7px;top:669px;width:56.80000000000001px;height:28.399999999999977px;background:#f4eff2;border-top:1px solid #fff;border-left:1px solid #fff;border-right:1.5px solid #000;border-bottom:1.5px solid #000;box-sizing:border-box;"></div><div style="position:absolute;left:197.61px;top:677.44px;font-size:14.46px;font-weight:normal;color:#000;white-space:nowrap;line-height:1;transform:scaleX(0.9558);transform-origin:0 0;">Points</div><div style="position:absolute;left:258.06px;top:676.61px;font-size:14.54px;font-weight:normal;color:#000;white-space:nowrap;line-height:1;transform:scaleX(0.9129);transform-origin:0 0;">KEdit</div>
</div></body></html>
